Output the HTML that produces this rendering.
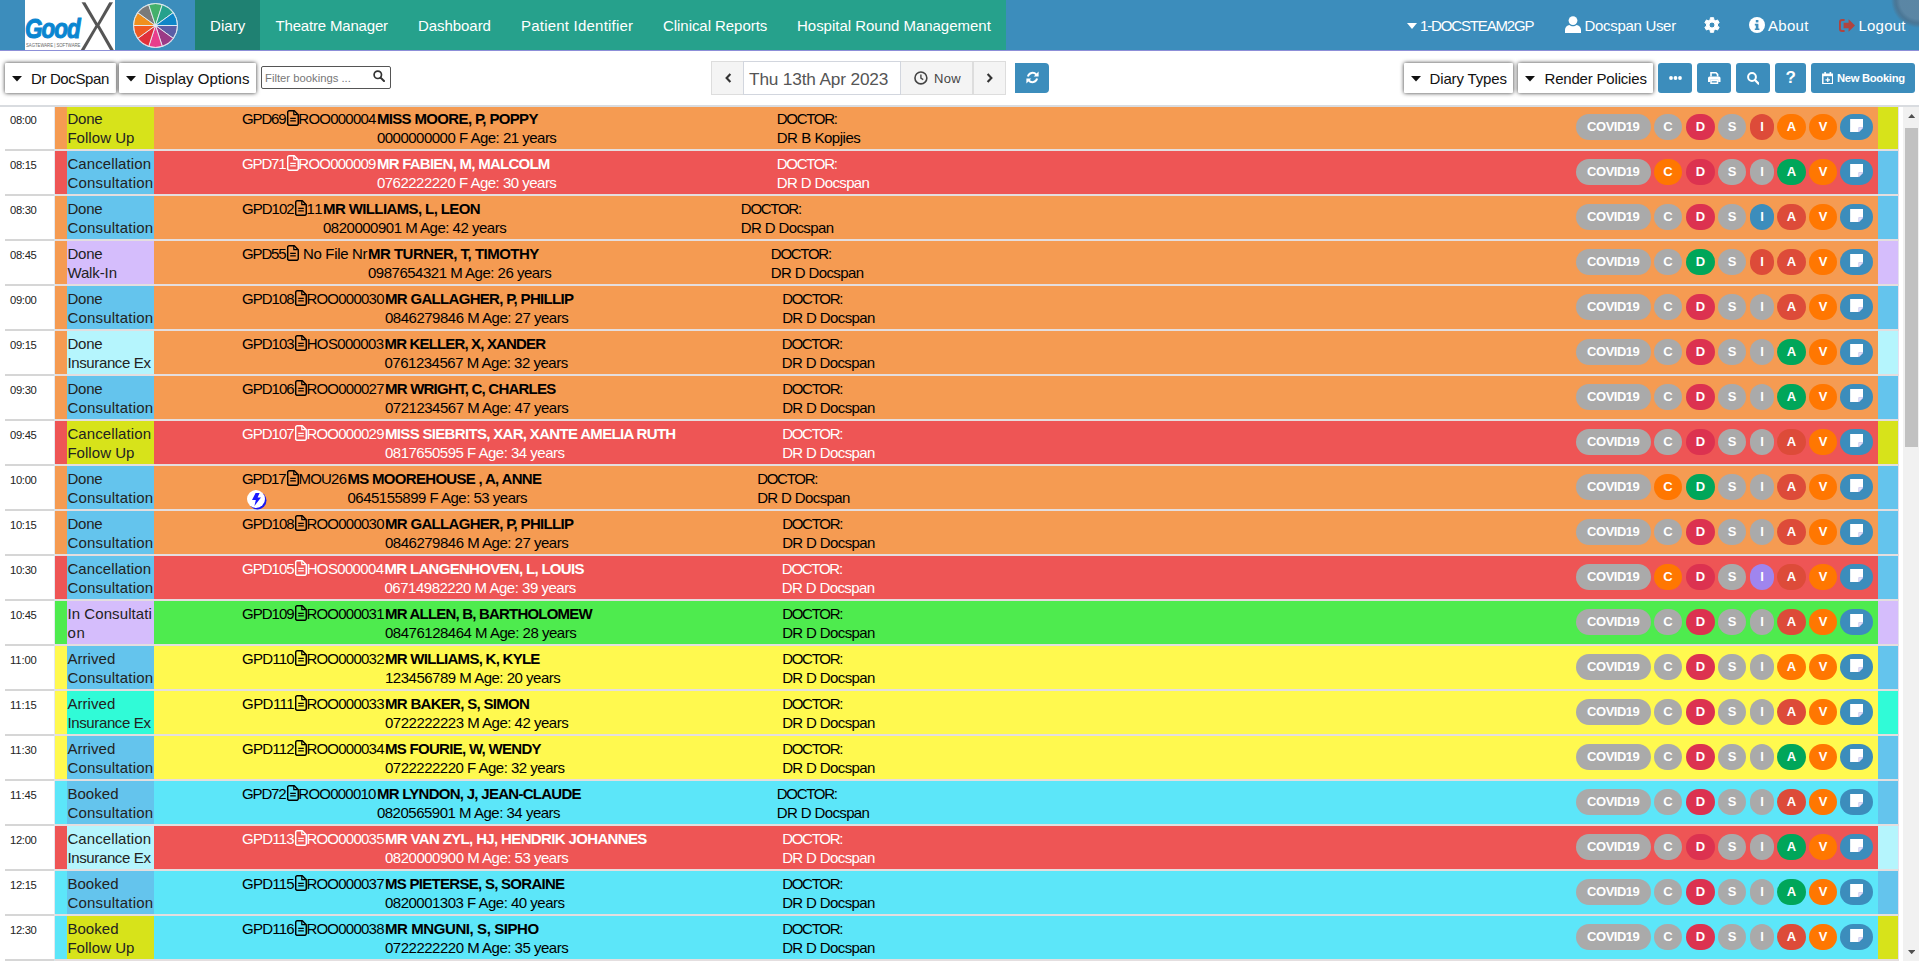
<!DOCTYPE html>
<html lang="en"><head><meta charset="utf-8"><title>Diary</title><style>
html,body{margin:0;padding:0;}
body{width:1919px;height:961px;overflow:hidden;position:relative;background:#fff;font-family:"Liberation Sans",sans-serif;}
#pg{position:absolute;left:0;top:0;width:1919px;height:961px;overflow:hidden;}
#pg>div,#pg>svg,#pg>span{position:absolute;display:block;}
.t{white-space:pre;line-height:20px;}
.lg1,.lg2,.lg3{position:absolute;white-space:pre;transform-origin:0 0;}
.lg1{left:0;top:12px;font:italic bold 28px/34px "Liberation Sans",sans-serif;color:#0a86d1;transform:scaleX(.80);letter-spacing:-1.2px;-webkit-text-stroke:1.1px #0a86d1;}
.lg2{left:52px;top:-10px;font:400 74px/74px "Liberation Sans",sans-serif;color:#555;transform:scaleX(.82);-webkit-text-stroke:2.3px #fff;}
.lg3{left:1px;top:41.5px;font:400 5px/6px "Liberation Sans",sans-serif;color:#666;transform:scaleX(.85);}
</style></head><body><div id="pg">
<div style="left:0px;top:0px;width:1919px;height:50px;background:#3c8dbc;"></div>
<div style="left:0px;top:50px;width:1919px;height:1px;background:#8d8fd8;"></div>
<div style="left:25px;top:0px;width:90px;height:50px;background:#fff;overflow:hidden;"><div class="lg2">X</div><div class="lg1">Good</div><div class="lg3">SAGTEWARE | SOFTWARE</div></div>
<svg style="left:132.5px;top:2.5px;" width="45" height="45" viewBox="0 0 45 45"><circle cx="22.5" cy="22.5" r="22.5" fill="#e8eef4"/><path d="M22.5 22.5L44.40 22.50A21.9 21.9 0 0 1 40.22 35.37Z" fill="#5b5ea6" stroke="#e8eef4" stroke-width="0.9"/><path d="M22.5 22.5L40.22 35.37A21.9 21.9 0 0 1 29.27 43.33Z" fill="#9b3a86" stroke="#e8eef4" stroke-width="0.9"/><path d="M22.5 22.5L29.27 43.33A21.9 21.9 0 0 1 15.73 43.33Z" fill="#e83e8c" stroke="#e8eef4" stroke-width="0.9"/><path d="M22.5 22.5L15.73 43.33A21.9 21.9 0 0 1 4.78 35.37Z" fill="#e0303a" stroke="#e8eef4" stroke-width="0.9"/><path d="M22.5 22.5L4.78 35.37A21.9 21.9 0 0 1 0.60 22.50Z" fill="#f05a22" stroke="#e8eef4" stroke-width="0.9"/><path d="M22.5 22.5L0.60 22.50A21.9 21.9 0 0 1 4.78 9.63Z" fill="#f0901e" stroke="#e8eef4" stroke-width="0.9"/><path d="M22.5 22.5L4.78 9.63A21.9 21.9 0 0 1 15.73 1.67Z" fill="#7a7a7a" stroke="#e8eef4" stroke-width="0.9"/><path d="M22.5 22.5L15.73 1.67A21.9 21.9 0 0 1 29.27 1.67Z" fill="#44b06a" stroke="#e8eef4" stroke-width="0.9"/><path d="M22.5 22.5L29.27 1.67A21.9 21.9 0 0 1 40.22 9.63Z" fill="#26a18c" stroke="#e8eef4" stroke-width="0.9"/><path d="M22.5 22.5L40.22 9.63A21.9 21.9 0 0 1 44.40 22.50Z" fill="#0e86c8" stroke="#e8eef4" stroke-width="0.9"/><circle cx="22.5" cy="22.5" r="1.6" fill="#dfe9f2"/></svg>
<div style="left:195px;top:0px;width:811px;height:50px;background:#26a18c;"></div>
<div style="left:195px;top:0px;width:65px;height:50px;background:#1f8172;"></div>
<svg style="left:1407px;top:22.5px;" width="10" height="6" viewBox="0 0 10 6"><path d="M0 0h10L5 6z" fill="#fff"/></svg>
<svg style="left:1565px;top:16px;" width="16" height="17" viewBox="0 0 16 17"><circle cx="8" cy="4.6" r="4.4" fill="#fff"/><path d="M0 17v-3.2c0-3 2.2-4.6 4.4-4.9 1 .9 2.2 1.4 3.6 1.4s2.6-.5 3.6-1.4c2.2.3 4.4 1.9 4.4 4.9V17z" fill="#fff"/></svg>
<svg style="left:1703.5px;top:17px;" width="16" height="16" viewBox="0 0 16 16"><path d="M6.27 2.67L6.36 0.68L9.64 0.68L9.73 2.67L11.75 3.84L13.52 2.92L15.16 5.76L13.48 6.84L13.48 9.16L15.16 10.24L13.52 13.08L11.75 12.16L9.73 13.33L9.64 15.32L6.36 15.32L6.27 13.33L4.25 12.16L2.48 13.08L0.84 10.24L2.52 9.16L2.52 6.84L0.84 5.76L2.48 2.92L4.25 3.84ZM11.0 8A3.0 3.0 0 1 0 5.0 8A3.0 3.0 0 1 0 11.0 8Z" fill="#fff" fill-rule="evenodd" stroke="#fff" stroke-width="1" stroke-linejoin="round"/></svg>
<svg style="left:1749px;top:17px;" width="16" height="16" viewBox="0 0 16 16"><circle cx="8" cy="8" r="8" fill="#fff"/><rect x="6.8" y="3" width="2.6" height="2.4" fill="#3c8dbc"/><path d="M5.8 6.8h3.6v4.6h1v1.6H5.8v-1.6h1V8.4h-1z" fill="#3c8dbc"/></svg>
<svg style="left:1839px;top:18.5px;" width="16" height="13" viewBox="0 0 16 13"><path d="M5.6 0H3A3 3 0 0 0 0 3v7a3 3 0 0 0 3 3h2.6v-1.9H3.2A1.3 1.3 0 0 1 1.9 9.8V3.2a1.3 1.3 0 0 1 1.3-1.3h2.4z" fill="#b0443f"/><path d="M9.6 0.3L16 6.5 9.6 12.7V9.2H4.6V3.8h5z" fill="#b0443f"/></svg>
<div style="left:1889px;top:-30px;width:60px;height:60px;border-radius:50%;background:radial-gradient(circle,rgba(110,130,150,.62) 0,rgba(110,130,150,.62) 19px,rgba(80,110,135,.72) 23px,rgba(80,110,135,.55) 25px,rgba(80,110,135,0) 28px);"></div>
<div style="left:5px;top:63px;width:111px;height:30px;background:#fff;box-shadow:0 0 4px rgba(0,0,0,.8);border-radius:1px;"></div>
<svg style="left:12px;top:76px;" width="10" height="5.5" viewBox="0 0 10 5.5"><path d="M0 0h10L5 5.5z" fill="#111"/></svg>
<div style="left:119px;top:63px;width:137px;height:30px;background:#fff;box-shadow:0 0 4px rgba(0,0,0,.8);border-radius:1px;"></div>
<svg style="left:126px;top:76px;" width="10" height="5.5" viewBox="0 0 10 5.5"><path d="M0 0h10L5 5.5z" fill="#111"/></svg>
<div style="left:1404px;top:63px;width:109px;height:30px;background:#fff;box-shadow:0 0 4px rgba(0,0,0,.8);border-radius:1px;"></div>
<svg style="left:1411px;top:76px;" width="10" height="5.5" viewBox="0 0 10 5.5"><path d="M0 0h10L5 5.5z" fill="#111"/></svg>
<div style="left:1518px;top:63px;width:135px;height:30px;background:#fff;box-shadow:0 0 4px rgba(0,0,0,.8);border-radius:1px;"></div>
<svg style="left:1525px;top:76px;" width="10" height="5.5" viewBox="0 0 10 5.5"><path d="M0 0h10L5 5.5z" fill="#111"/></svg>
<div style="left:261px;top:66px;width:130px;height:23px;background:#fff;border:1px solid #555;border-radius:2px;box-sizing:border-box;"></div>
<svg style="left:373.2px;top:70.3px;" width="12" height="12" viewBox="0 0 12 12"><circle cx="4.8" cy="4.8" r="3.7" fill="none" stroke="#333" stroke-width="1.7"/><path d="M7.6 7.6L11 11" stroke="#333" stroke-width="2" stroke-linecap="round"/></svg>
<div style="left:711px;top:61px;width:295px;height:34px;background:#f4f4f4;border:1px solid #ddd;box-sizing:border-box;"></div>
<div style="left:743px;top:61px;width:158px;height:34px;background:#fff;border:1px solid #d2d6de;box-sizing:border-box;"></div>
<div style="left:972px;top:61px;width:2px;height:34px;background:#ddd;"></div>
<svg style="left:725px;top:73px;" width="7" height="10" viewBox="0 0 7 10"><path d="M5.4 1L1.6 5l3.8 4" fill="none" stroke="#333" stroke-width="2.1"/></svg>
<svg style="left:986px;top:73px;" width="7" height="10" viewBox="0 0 7 10"><path d="M1.6 1l3.8 4-3.8 4" fill="none" stroke="#333" stroke-width="2.1"/></svg>
<svg style="left:914.3px;top:70.9px;" width="13.8" height="13.8" viewBox="0 0 13 13"><circle cx="6.5" cy="6.5" r="5.6" fill="none" stroke="#444" stroke-width="1.5"/><path d="M6.5 3.2v3.6l2.2 1.3" fill="none" stroke="#444" stroke-width="1.3"/></svg>
<div style="left:1015px;top:63px;width:34px;height:30px;background:#3c8dbc;border-radius:0 4px 4px 0;"></div>
<svg style="left:1025.5px;top:70.8px;" width="13" height="13" viewBox="0 0 13 13"><path d="M1.9 5.4A4.8 4.8 0 0 1 10.3 3.6" fill="none" stroke="#fff" stroke-width="2"/><path d="M12.6 0.6v4.9H7.7z" fill="#fff"/><path d="M11.1 7.6A4.8 4.8 0 0 1 2.7 9.4" fill="none" stroke="#fff" stroke-width="2"/><path d="M0.4 12.4V7.5h4.9z" fill="#fff"/></svg>
<div style="left:1658px;top:63px;width:34px;height:30px;background:#3c8dbc;border-radius:3px;"></div>
<div style="left:1697px;top:63px;width:34px;height:30px;background:#3c8dbc;border-radius:3px;"></div>
<div style="left:1736px;top:63px;width:34px;height:30px;background:#3c8dbc;border-radius:3px;"></div>
<div style="left:1775px;top:63px;width:31px;height:30px;background:#3c8dbc;border-radius:3px;"></div>
<div style="left:1811px;top:63px;width:104px;height:30px;background:#3c8dbc;border-radius:3px;"></div>
<svg style="left:1668.5px;top:75.5px;" width="13" height="4" viewBox="0 0 13 4"><circle cx="2" cy="2" r="1.9" fill="#fff"/><circle cx="6.5" cy="2" r="1.9" fill="#fff"/><circle cx="11" cy="2" r="1.9" fill="#fff"/></svg>
<svg style="left:1708px;top:72px;" width="12.5" height="12" viewBox="0 0 12.5 12"><path d="M3 4.6V0.8h5l1.6 1.6v2.2" fill="none" stroke="#fff" stroke-width="1.6"/><path d="M0 6a1.6 1.6 0 0 1 1.6-1.6h9.3A1.6 1.6 0 0 1 12.5 6v4h-2.3V7.8H2.3V10H0z" fill="#fff"/><path d="M3 8.6h6.5v2.6H3z" fill="none" stroke="#fff" stroke-width="1.5"/></svg>
<svg style="left:1746.5px;top:72px;" width="12.5" height="12.5" viewBox="0 0 12.5 12.5"><circle cx="5" cy="5" r="3.9" fill="none" stroke="#fff" stroke-width="2"/><path d="M8 8l3.6 3.6" stroke="#fff" stroke-width="2.2" stroke-linecap="round"/></svg>
<svg style="left:1821.5px;top:71.5px;" width="11.5" height="12.5" viewBox="0 0 11.5 12.5"><path d="M0.8 2.3h9.9v9.4H0.8z" fill="none" stroke="#fff" stroke-width="1.5"/><path d="M0.8 2h9.9v2.2H0.8z" fill="#fff"/><path d="M3.1 0v2.6M8.4 0v2.6" stroke="#fff" stroke-width="1.6"/><path d="M5.75 5.6v4.4M3.5 7.8H8" stroke="#fff" stroke-width="1.3"/></svg>
<div style="left:0px;top:105px;width:1919px;height:2px;background:#d9dce0;"></div>
<div style="left:55px;top:107px;width:1843px;height:42px;background:#f59b52;"></div>
<div style="left:54px;top:107px;width:1px;height:42px;background:#e4e8ee;"></div>
<div style="left:67px;top:107px;width:87px;height:42px;background:#d7e31a;"></div>
<div style="left:1878px;top:107px;width:20px;height:42px;background:#d7e31a;"></div>
<div style="left:1898px;top:107px;width:1px;height:42px;background:#e6e0f0;"></div>
<div style="left:5px;top:149px;width:50px;height:2px;background:#d6d6d6;"></div>
<div style="left:55px;top:149px;width:1844px;height:2px;background:#e4dedf;"></div>
<div style="left:54px;top:149px;width:1px;height:2px;background:#d8e6ea;"></div>
<svg style="left:287.0px;top:110px;" width="12" height="16" viewBox="0 0 12 16"><path d="M2.2 .75H7.3L11.25 4.7V13.8a1.5 1.5 0 0 1-1.5 1.5H2.2a1.5 1.5 0 0 1-1.5-1.5V2.25a1.5 1.5 0 0 1 1.5-1.5z" fill="none" stroke="#000" stroke-width="1.45" stroke-linejoin="round"/><path d="M6.8 1v3.6h3.9" fill="none" stroke="#000" stroke-width="1.2"/><path d="M3.2 8.4h5.6M3.2 10.9h5.6" stroke="#000" stroke-width="1.35"/></svg>
<div style="left:1576px;top:114px;width:75px;height:26px;background:#aaaaaa;border-radius:13px;"></div>
<div style="left:1654px;top:114px;width:28px;height:26px;background:#aaaaaa;border-radius:13px;"></div>
<div style="left:1686px;top:114px;width:29px;height:26px;background:#dc3250;border-radius:13px;"></div>
<div style="left:1718px;top:114px;width:28px;height:26px;background:#aaaaaa;border-radius:13px;"></div>
<div style="left:1750px;top:114px;width:24px;height:26px;background:#dd4b39;border-radius:13px;"></div>
<div style="left:1777px;top:114px;width:29px;height:26px;background:#ff7701;border-radius:13px;"></div>
<div style="left:1809px;top:114px;width:28px;height:26px;background:#ff7701;border-radius:13px;"></div>
<div style="left:1840px;top:114px;width:33px;height:26px;background:#3c8dbc;border-radius:13px;"></div>
<svg style="left:1850px;top:119px;" width="13.3" height="13" viewBox="0 0 13 13"><path d="M0 0h13v8.6L8.6 13H0z" fill="#fff"/><path d="M8.6 13V8.6H13z" fill="#e4e6fa" stroke="#b9b4e6" stroke-width=".6"/></svg>
<div style="left:55px;top:151px;width:1843px;height:43px;background:#ee5555;"></div>
<div style="left:54px;top:151px;width:1px;height:43px;background:#e4e8ee;"></div>
<div style="left:67px;top:151px;width:87px;height:43px;background:#64c4ed;"></div>
<div style="left:1878px;top:151px;width:20px;height:43px;background:#64c4ed;"></div>
<div style="left:1898px;top:151px;width:1px;height:43px;background:#e6e0f0;"></div>
<div style="left:5px;top:194px;width:50px;height:2px;background:#d6d6d6;"></div>
<div style="left:55px;top:194px;width:1844px;height:2px;background:#e4dedf;"></div>
<div style="left:54px;top:194px;width:1px;height:2px;background:#d8e6ea;"></div>
<svg style="left:287.0px;top:155px;" width="12" height="16" viewBox="0 0 12 16"><path d="M2.2 .75H7.3L11.25 4.7V13.8a1.5 1.5 0 0 1-1.5 1.5H2.2a1.5 1.5 0 0 1-1.5-1.5V2.25a1.5 1.5 0 0 1 1.5-1.5z" fill="none" stroke="#fff" stroke-width="1.45" stroke-linejoin="round"/><path d="M6.8 1v3.6h3.9" fill="none" stroke="#fff" stroke-width="1.2"/><path d="M3.2 8.4h5.6M3.2 10.9h5.6" stroke="#fff" stroke-width="1.35"/></svg>
<div style="left:1576px;top:159px;width:75px;height:26px;background:#aaaaaa;border-radius:13px;"></div>
<div style="left:1654px;top:159px;width:28px;height:26px;background:#ff7701;border-radius:13px;"></div>
<div style="left:1686px;top:159px;width:29px;height:26px;background:#dc3250;border-radius:13px;"></div>
<div style="left:1718px;top:159px;width:28px;height:26px;background:#aaaaaa;border-radius:13px;"></div>
<div style="left:1750px;top:159px;width:24px;height:26px;background:#aaaaaa;border-radius:13px;"></div>
<div style="left:1777px;top:159px;width:29px;height:26px;background:#00a65a;border-radius:13px;"></div>
<div style="left:1809px;top:159px;width:28px;height:26px;background:#ff7701;border-radius:13px;"></div>
<div style="left:1840px;top:159px;width:33px;height:26px;background:#3c8dbc;border-radius:13px;"></div>
<svg style="left:1850px;top:164px;" width="13.3" height="13" viewBox="0 0 13 13"><path d="M0 0h13v8.6L8.6 13H0z" fill="#fff"/><path d="M8.6 13V8.6H13z" fill="#e4e6fa" stroke="#b9b4e6" stroke-width=".6"/></svg>
<div style="left:55px;top:196px;width:1843px;height:43px;background:#f59b52;"></div>
<div style="left:54px;top:196px;width:1px;height:43px;background:#e4e8ee;"></div>
<div style="left:67px;top:196px;width:87px;height:43px;background:#64c4ed;"></div>
<div style="left:1878px;top:196px;width:20px;height:43px;background:#64c4ed;"></div>
<div style="left:1898px;top:196px;width:1px;height:43px;background:#e6e0f0;"></div>
<div style="left:5px;top:239px;width:50px;height:2px;background:#d6d6d6;"></div>
<div style="left:55px;top:239px;width:1844px;height:2px;background:#e4dedf;"></div>
<div style="left:54px;top:239px;width:1px;height:2px;background:#d8e6ea;"></div>
<svg style="left:295.0px;top:200px;" width="12" height="16" viewBox="0 0 12 16"><path d="M2.2 .75H7.3L11.25 4.7V13.8a1.5 1.5 0 0 1-1.5 1.5H2.2a1.5 1.5 0 0 1-1.5-1.5V2.25a1.5 1.5 0 0 1 1.5-1.5z" fill="none" stroke="#000" stroke-width="1.45" stroke-linejoin="round"/><path d="M6.8 1v3.6h3.9" fill="none" stroke="#000" stroke-width="1.2"/><path d="M3.2 8.4h5.6M3.2 10.9h5.6" stroke="#000" stroke-width="1.35"/></svg>
<div style="left:1576px;top:204px;width:75px;height:26px;background:#aaaaaa;border-radius:13px;"></div>
<div style="left:1654px;top:204px;width:28px;height:26px;background:#aaaaaa;border-radius:13px;"></div>
<div style="left:1686px;top:204px;width:29px;height:26px;background:#dc3250;border-radius:13px;"></div>
<div style="left:1718px;top:204px;width:28px;height:26px;background:#aaaaaa;border-radius:13px;"></div>
<div style="left:1750px;top:204px;width:24px;height:26px;background:#3c8dbc;border-radius:13px;"></div>
<div style="left:1777px;top:204px;width:29px;height:26px;background:#dd4b39;border-radius:13px;"></div>
<div style="left:1809px;top:204px;width:28px;height:26px;background:#ff7701;border-radius:13px;"></div>
<div style="left:1840px;top:204px;width:33px;height:26px;background:#3c8dbc;border-radius:13px;"></div>
<svg style="left:1850px;top:209px;" width="13.3" height="13" viewBox="0 0 13 13"><path d="M0 0h13v8.6L8.6 13H0z" fill="#fff"/><path d="M8.6 13V8.6H13z" fill="#e4e6fa" stroke="#b9b4e6" stroke-width=".6"/></svg>
<div style="left:55px;top:241px;width:1843px;height:43px;background:#f59b52;"></div>
<div style="left:54px;top:241px;width:1px;height:43px;background:#e4e8ee;"></div>
<div style="left:67px;top:241px;width:87px;height:43px;background:#d5bdfc;"></div>
<div style="left:1878px;top:241px;width:20px;height:43px;background:#d5bdfc;"></div>
<div style="left:1898px;top:241px;width:1px;height:43px;background:#e6e0f0;"></div>
<div style="left:5px;top:284px;width:50px;height:2px;background:#d6d6d6;"></div>
<div style="left:55px;top:284px;width:1844px;height:2px;background:#e4dedf;"></div>
<div style="left:54px;top:284px;width:1px;height:2px;background:#d8e6ea;"></div>
<svg style="left:287.0px;top:245px;" width="12" height="16" viewBox="0 0 12 16"><path d="M2.2 .75H7.3L11.25 4.7V13.8a1.5 1.5 0 0 1-1.5 1.5H2.2a1.5 1.5 0 0 1-1.5-1.5V2.25a1.5 1.5 0 0 1 1.5-1.5z" fill="none" stroke="#000" stroke-width="1.45" stroke-linejoin="round"/><path d="M6.8 1v3.6h3.9" fill="none" stroke="#000" stroke-width="1.2"/><path d="M3.2 8.4h5.6M3.2 10.9h5.6" stroke="#000" stroke-width="1.35"/></svg>
<div style="left:1576px;top:249px;width:75px;height:26px;background:#aaaaaa;border-radius:13px;"></div>
<div style="left:1654px;top:249px;width:28px;height:26px;background:#aaaaaa;border-radius:13px;"></div>
<div style="left:1686px;top:249px;width:29px;height:26px;background:#00a65a;border-radius:13px;"></div>
<div style="left:1718px;top:249px;width:28px;height:26px;background:#aaaaaa;border-radius:13px;"></div>
<div style="left:1750px;top:249px;width:24px;height:26px;background:#dd4b39;border-radius:13px;"></div>
<div style="left:1777px;top:249px;width:29px;height:26px;background:#dd4b39;border-radius:13px;"></div>
<div style="left:1809px;top:249px;width:28px;height:26px;background:#ff7701;border-radius:13px;"></div>
<div style="left:1840px;top:249px;width:33px;height:26px;background:#3c8dbc;border-radius:13px;"></div>
<svg style="left:1850px;top:254px;" width="13.3" height="13" viewBox="0 0 13 13"><path d="M0 0h13v8.6L8.6 13H0z" fill="#fff"/><path d="M8.6 13V8.6H13z" fill="#e4e6fa" stroke="#b9b4e6" stroke-width=".6"/></svg>
<div style="left:55px;top:286px;width:1843px;height:43px;background:#f59b52;"></div>
<div style="left:54px;top:286px;width:1px;height:43px;background:#e4e8ee;"></div>
<div style="left:67px;top:286px;width:87px;height:43px;background:#64c4ed;"></div>
<div style="left:1878px;top:286px;width:20px;height:43px;background:#64c4ed;"></div>
<div style="left:1898px;top:286px;width:1px;height:43px;background:#e6e0f0;"></div>
<div style="left:5px;top:329px;width:50px;height:2px;background:#d6d6d6;"></div>
<div style="left:55px;top:329px;width:1844px;height:2px;background:#e4dedf;"></div>
<div style="left:54px;top:329px;width:1px;height:2px;background:#d8e6ea;"></div>
<svg style="left:295.0px;top:290px;" width="12" height="16" viewBox="0 0 12 16"><path d="M2.2 .75H7.3L11.25 4.7V13.8a1.5 1.5 0 0 1-1.5 1.5H2.2a1.5 1.5 0 0 1-1.5-1.5V2.25a1.5 1.5 0 0 1 1.5-1.5z" fill="none" stroke="#000" stroke-width="1.45" stroke-linejoin="round"/><path d="M6.8 1v3.6h3.9" fill="none" stroke="#000" stroke-width="1.2"/><path d="M3.2 8.4h5.6M3.2 10.9h5.6" stroke="#000" stroke-width="1.35"/></svg>
<div style="left:1576px;top:294px;width:75px;height:26px;background:#aaaaaa;border-radius:13px;"></div>
<div style="left:1654px;top:294px;width:28px;height:26px;background:#aaaaaa;border-radius:13px;"></div>
<div style="left:1686px;top:294px;width:29px;height:26px;background:#dc3250;border-radius:13px;"></div>
<div style="left:1718px;top:294px;width:28px;height:26px;background:#aaaaaa;border-radius:13px;"></div>
<div style="left:1750px;top:294px;width:24px;height:26px;background:#aaaaaa;border-radius:13px;"></div>
<div style="left:1777px;top:294px;width:29px;height:26px;background:#dd4b39;border-radius:13px;"></div>
<div style="left:1809px;top:294px;width:28px;height:26px;background:#ff7701;border-radius:13px;"></div>
<div style="left:1840px;top:294px;width:33px;height:26px;background:#3c8dbc;border-radius:13px;"></div>
<svg style="left:1850px;top:299px;" width="13.3" height="13" viewBox="0 0 13 13"><path d="M0 0h13v8.6L8.6 13H0z" fill="#fff"/><path d="M8.6 13V8.6H13z" fill="#e4e6fa" stroke="#b9b4e6" stroke-width=".6"/></svg>
<div style="left:55px;top:331px;width:1843px;height:43px;background:#f59b52;"></div>
<div style="left:54px;top:331px;width:1px;height:43px;background:#e4e8ee;"></div>
<div style="left:67px;top:331px;width:87px;height:43px;background:#b5f5fd;"></div>
<div style="left:1878px;top:331px;width:20px;height:43px;background:#b5f5fd;"></div>
<div style="left:1898px;top:331px;width:1px;height:43px;background:#e6e0f0;"></div>
<div style="left:5px;top:374px;width:50px;height:2px;background:#d6d6d6;"></div>
<div style="left:55px;top:374px;width:1844px;height:2px;background:#e4dedf;"></div>
<div style="left:54px;top:374px;width:1px;height:2px;background:#d8e6ea;"></div>
<svg style="left:295.0px;top:335px;" width="12" height="16" viewBox="0 0 12 16"><path d="M2.2 .75H7.3L11.25 4.7V13.8a1.5 1.5 0 0 1-1.5 1.5H2.2a1.5 1.5 0 0 1-1.5-1.5V2.25a1.5 1.5 0 0 1 1.5-1.5z" fill="none" stroke="#000" stroke-width="1.45" stroke-linejoin="round"/><path d="M6.8 1v3.6h3.9" fill="none" stroke="#000" stroke-width="1.2"/><path d="M3.2 8.4h5.6M3.2 10.9h5.6" stroke="#000" stroke-width="1.35"/></svg>
<div style="left:1576px;top:339px;width:75px;height:26px;background:#aaaaaa;border-radius:13px;"></div>
<div style="left:1654px;top:339px;width:28px;height:26px;background:#aaaaaa;border-radius:13px;"></div>
<div style="left:1686px;top:339px;width:29px;height:26px;background:#dc3250;border-radius:13px;"></div>
<div style="left:1718px;top:339px;width:28px;height:26px;background:#aaaaaa;border-radius:13px;"></div>
<div style="left:1750px;top:339px;width:24px;height:26px;background:#aaaaaa;border-radius:13px;"></div>
<div style="left:1777px;top:339px;width:29px;height:26px;background:#00a65a;border-radius:13px;"></div>
<div style="left:1809px;top:339px;width:28px;height:26px;background:#ff7701;border-radius:13px;"></div>
<div style="left:1840px;top:339px;width:33px;height:26px;background:#3c8dbc;border-radius:13px;"></div>
<svg style="left:1850px;top:344px;" width="13.3" height="13" viewBox="0 0 13 13"><path d="M0 0h13v8.6L8.6 13H0z" fill="#fff"/><path d="M8.6 13V8.6H13z" fill="#e4e6fa" stroke="#b9b4e6" stroke-width=".6"/></svg>
<div style="left:55px;top:376px;width:1843px;height:43px;background:#f59b52;"></div>
<div style="left:54px;top:376px;width:1px;height:43px;background:#e4e8ee;"></div>
<div style="left:67px;top:376px;width:87px;height:43px;background:#64c4ed;"></div>
<div style="left:1878px;top:376px;width:20px;height:43px;background:#64c4ed;"></div>
<div style="left:1898px;top:376px;width:1px;height:43px;background:#e6e0f0;"></div>
<div style="left:5px;top:419px;width:50px;height:2px;background:#d6d6d6;"></div>
<div style="left:55px;top:419px;width:1844px;height:2px;background:#e4dedf;"></div>
<div style="left:54px;top:419px;width:1px;height:2px;background:#d8e6ea;"></div>
<svg style="left:295.0px;top:380px;" width="12" height="16" viewBox="0 0 12 16"><path d="M2.2 .75H7.3L11.25 4.7V13.8a1.5 1.5 0 0 1-1.5 1.5H2.2a1.5 1.5 0 0 1-1.5-1.5V2.25a1.5 1.5 0 0 1 1.5-1.5z" fill="none" stroke="#000" stroke-width="1.45" stroke-linejoin="round"/><path d="M6.8 1v3.6h3.9" fill="none" stroke="#000" stroke-width="1.2"/><path d="M3.2 8.4h5.6M3.2 10.9h5.6" stroke="#000" stroke-width="1.35"/></svg>
<div style="left:1576px;top:384px;width:75px;height:26px;background:#aaaaaa;border-radius:13px;"></div>
<div style="left:1654px;top:384px;width:28px;height:26px;background:#aaaaaa;border-radius:13px;"></div>
<div style="left:1686px;top:384px;width:29px;height:26px;background:#dc3250;border-radius:13px;"></div>
<div style="left:1718px;top:384px;width:28px;height:26px;background:#aaaaaa;border-radius:13px;"></div>
<div style="left:1750px;top:384px;width:24px;height:26px;background:#aaaaaa;border-radius:13px;"></div>
<div style="left:1777px;top:384px;width:29px;height:26px;background:#00a65a;border-radius:13px;"></div>
<div style="left:1809px;top:384px;width:28px;height:26px;background:#ff7701;border-radius:13px;"></div>
<div style="left:1840px;top:384px;width:33px;height:26px;background:#3c8dbc;border-radius:13px;"></div>
<svg style="left:1850px;top:389px;" width="13.3" height="13" viewBox="0 0 13 13"><path d="M0 0h13v8.6L8.6 13H0z" fill="#fff"/><path d="M8.6 13V8.6H13z" fill="#e4e6fa" stroke="#b9b4e6" stroke-width=".6"/></svg>
<div style="left:55px;top:421px;width:1843px;height:43px;background:#ee5555;"></div>
<div style="left:54px;top:421px;width:1px;height:43px;background:#e4e8ee;"></div>
<div style="left:67px;top:421px;width:87px;height:43px;background:#d7e31a;"></div>
<div style="left:1878px;top:421px;width:20px;height:43px;background:#d7e31a;"></div>
<div style="left:1898px;top:421px;width:1px;height:43px;background:#e6e0f0;"></div>
<div style="left:5px;top:464px;width:50px;height:2px;background:#d6d6d6;"></div>
<div style="left:55px;top:464px;width:1844px;height:2px;background:#e4dedf;"></div>
<div style="left:54px;top:464px;width:1px;height:2px;background:#d8e6ea;"></div>
<svg style="left:295.0px;top:425px;" width="12" height="16" viewBox="0 0 12 16"><path d="M2.2 .75H7.3L11.25 4.7V13.8a1.5 1.5 0 0 1-1.5 1.5H2.2a1.5 1.5 0 0 1-1.5-1.5V2.25a1.5 1.5 0 0 1 1.5-1.5z" fill="none" stroke="#fff" stroke-width="1.45" stroke-linejoin="round"/><path d="M6.8 1v3.6h3.9" fill="none" stroke="#fff" stroke-width="1.2"/><path d="M3.2 8.4h5.6M3.2 10.9h5.6" stroke="#fff" stroke-width="1.35"/></svg>
<div style="left:1576px;top:429px;width:75px;height:26px;background:#aaaaaa;border-radius:13px;"></div>
<div style="left:1654px;top:429px;width:28px;height:26px;background:#aaaaaa;border-radius:13px;"></div>
<div style="left:1686px;top:429px;width:29px;height:26px;background:#dc3250;border-radius:13px;"></div>
<div style="left:1718px;top:429px;width:28px;height:26px;background:#aaaaaa;border-radius:13px;"></div>
<div style="left:1750px;top:429px;width:24px;height:26px;background:#aaaaaa;border-radius:13px;"></div>
<div style="left:1777px;top:429px;width:29px;height:26px;background:#dd4b39;border-radius:13px;"></div>
<div style="left:1809px;top:429px;width:28px;height:26px;background:#ff7701;border-radius:13px;"></div>
<div style="left:1840px;top:429px;width:33px;height:26px;background:#3c8dbc;border-radius:13px;"></div>
<svg style="left:1850px;top:434px;" width="13.3" height="13" viewBox="0 0 13 13"><path d="M0 0h13v8.6L8.6 13H0z" fill="#fff"/><path d="M8.6 13V8.6H13z" fill="#e4e6fa" stroke="#b9b4e6" stroke-width=".6"/></svg>
<div style="left:55px;top:466px;width:1843px;height:43px;background:#f59b52;"></div>
<div style="left:54px;top:466px;width:1px;height:43px;background:#e4e8ee;"></div>
<div style="left:67px;top:466px;width:87px;height:43px;background:#64c4ed;"></div>
<div style="left:1878px;top:466px;width:20px;height:43px;background:#64c4ed;"></div>
<div style="left:1898px;top:466px;width:1px;height:43px;background:#e6e0f0;"></div>
<div style="left:5px;top:509px;width:50px;height:2px;background:#d6d6d6;"></div>
<div style="left:55px;top:509px;width:1844px;height:2px;background:#e4dedf;"></div>
<div style="left:54px;top:509px;width:1px;height:2px;background:#d8e6ea;"></div>
<svg style="left:287.0px;top:470px;" width="12" height="16" viewBox="0 0 12 16"><path d="M2.2 .75H7.3L11.25 4.7V13.8a1.5 1.5 0 0 1-1.5 1.5H2.2a1.5 1.5 0 0 1-1.5-1.5V2.25a1.5 1.5 0 0 1 1.5-1.5z" fill="none" stroke="#000" stroke-width="1.45" stroke-linejoin="round"/><path d="M6.8 1v3.6h3.9" fill="none" stroke="#000" stroke-width="1.2"/><path d="M3.2 8.4h5.6M3.2 10.9h5.6" stroke="#000" stroke-width="1.35"/></svg>
<div style="left:1576px;top:474px;width:75px;height:26px;background:#aaaaaa;border-radius:13px;"></div>
<div style="left:1654px;top:474px;width:28px;height:26px;background:#ff7701;border-radius:13px;"></div>
<div style="left:1686px;top:474px;width:29px;height:26px;background:#00a65a;border-radius:13px;"></div>
<div style="left:1718px;top:474px;width:28px;height:26px;background:#aaaaaa;border-radius:13px;"></div>
<div style="left:1750px;top:474px;width:24px;height:26px;background:#aaaaaa;border-radius:13px;"></div>
<div style="left:1777px;top:474px;width:29px;height:26px;background:#dd4b39;border-radius:13px;"></div>
<div style="left:1809px;top:474px;width:28px;height:26px;background:#ff7701;border-radius:13px;"></div>
<div style="left:1840px;top:474px;width:33px;height:26px;background:#3c8dbc;border-radius:13px;"></div>
<svg style="left:1850px;top:479px;" width="13.3" height="13" viewBox="0 0 13 13"><path d="M0 0h13v8.6L8.6 13H0z" fill="#fff"/><path d="M8.6 13V8.6H13z" fill="#e4e6fa" stroke="#b9b4e6" stroke-width=".6"/></svg>
<div style="left:247px;top:490px;width:18px;height:18px;background:#fff;border-radius:50%;box-shadow:1.5px 1.5px 0 #1a1af0;"></div>
<svg style="left:252px;top:492.5px;" width="9" height="13" viewBox="0 0 9 13"><path d="M3.6 0h4L5.6 4.4H9L2.4 13l1.4-6H0z" fill="#1a1aff"/></svg>
<div style="left:55px;top:511px;width:1843px;height:43px;background:#f59b52;"></div>
<div style="left:54px;top:511px;width:1px;height:43px;background:#e4e8ee;"></div>
<div style="left:67px;top:511px;width:87px;height:43px;background:#64c4ed;"></div>
<div style="left:1878px;top:511px;width:20px;height:43px;background:#64c4ed;"></div>
<div style="left:1898px;top:511px;width:1px;height:43px;background:#e6e0f0;"></div>
<div style="left:5px;top:554px;width:50px;height:2px;background:#d6d6d6;"></div>
<div style="left:55px;top:554px;width:1844px;height:2px;background:#e4dedf;"></div>
<div style="left:54px;top:554px;width:1px;height:2px;background:#d8e6ea;"></div>
<svg style="left:295.0px;top:515px;" width="12" height="16" viewBox="0 0 12 16"><path d="M2.2 .75H7.3L11.25 4.7V13.8a1.5 1.5 0 0 1-1.5 1.5H2.2a1.5 1.5 0 0 1-1.5-1.5V2.25a1.5 1.5 0 0 1 1.5-1.5z" fill="none" stroke="#000" stroke-width="1.45" stroke-linejoin="round"/><path d="M6.8 1v3.6h3.9" fill="none" stroke="#000" stroke-width="1.2"/><path d="M3.2 8.4h5.6M3.2 10.9h5.6" stroke="#000" stroke-width="1.35"/></svg>
<div style="left:1576px;top:519px;width:75px;height:26px;background:#aaaaaa;border-radius:13px;"></div>
<div style="left:1654px;top:519px;width:28px;height:26px;background:#aaaaaa;border-radius:13px;"></div>
<div style="left:1686px;top:519px;width:29px;height:26px;background:#dc3250;border-radius:13px;"></div>
<div style="left:1718px;top:519px;width:28px;height:26px;background:#aaaaaa;border-radius:13px;"></div>
<div style="left:1750px;top:519px;width:24px;height:26px;background:#aaaaaa;border-radius:13px;"></div>
<div style="left:1777px;top:519px;width:29px;height:26px;background:#dd4b39;border-radius:13px;"></div>
<div style="left:1809px;top:519px;width:28px;height:26px;background:#ff7701;border-radius:13px;"></div>
<div style="left:1840px;top:519px;width:33px;height:26px;background:#3c8dbc;border-radius:13px;"></div>
<svg style="left:1850px;top:524px;" width="13.3" height="13" viewBox="0 0 13 13"><path d="M0 0h13v8.6L8.6 13H0z" fill="#fff"/><path d="M8.6 13V8.6H13z" fill="#e4e6fa" stroke="#b9b4e6" stroke-width=".6"/></svg>
<div style="left:55px;top:556px;width:1843px;height:43px;background:#ee5555;"></div>
<div style="left:54px;top:556px;width:1px;height:43px;background:#e4e8ee;"></div>
<div style="left:67px;top:556px;width:87px;height:43px;background:#64c4ed;"></div>
<div style="left:1878px;top:556px;width:20px;height:43px;background:#64c4ed;"></div>
<div style="left:1898px;top:556px;width:1px;height:43px;background:#e6e0f0;"></div>
<div style="left:5px;top:599px;width:50px;height:2px;background:#d6d6d6;"></div>
<div style="left:55px;top:599px;width:1844px;height:2px;background:#e4dedf;"></div>
<div style="left:54px;top:599px;width:1px;height:2px;background:#d8e6ea;"></div>
<svg style="left:295.0px;top:560px;" width="12" height="16" viewBox="0 0 12 16"><path d="M2.2 .75H7.3L11.25 4.7V13.8a1.5 1.5 0 0 1-1.5 1.5H2.2a1.5 1.5 0 0 1-1.5-1.5V2.25a1.5 1.5 0 0 1 1.5-1.5z" fill="none" stroke="#fff" stroke-width="1.45" stroke-linejoin="round"/><path d="M6.8 1v3.6h3.9" fill="none" stroke="#fff" stroke-width="1.2"/><path d="M3.2 8.4h5.6M3.2 10.9h5.6" stroke="#fff" stroke-width="1.35"/></svg>
<div style="left:1576px;top:564px;width:75px;height:26px;background:#aaaaaa;border-radius:13px;"></div>
<div style="left:1654px;top:564px;width:28px;height:26px;background:#ff7701;border-radius:13px;"></div>
<div style="left:1686px;top:564px;width:29px;height:26px;background:#dc3250;border-radius:13px;"></div>
<div style="left:1718px;top:564px;width:28px;height:26px;background:#aaaaaa;border-radius:13px;"></div>
<div style="left:1750px;top:564px;width:24px;height:26px;background:#9f85ee;border-radius:13px;"></div>
<div style="left:1777px;top:564px;width:29px;height:26px;background:#dd4b39;border-radius:13px;"></div>
<div style="left:1809px;top:564px;width:28px;height:26px;background:#ff7701;border-radius:13px;"></div>
<div style="left:1840px;top:564px;width:33px;height:26px;background:#3c8dbc;border-radius:13px;"></div>
<svg style="left:1850px;top:569px;" width="13.3" height="13" viewBox="0 0 13 13"><path d="M0 0h13v8.6L8.6 13H0z" fill="#fff"/><path d="M8.6 13V8.6H13z" fill="#e4e6fa" stroke="#b9b4e6" stroke-width=".6"/></svg>
<div style="left:55px;top:601px;width:1843px;height:43px;background:#4eeb4e;"></div>
<div style="left:54px;top:601px;width:1px;height:43px;background:#e4e8ee;"></div>
<div style="left:67px;top:601px;width:87px;height:43px;background:#d5bdfc;"></div>
<div style="left:1878px;top:601px;width:20px;height:43px;background:#d5bdfc;"></div>
<div style="left:1898px;top:601px;width:1px;height:43px;background:#e6e0f0;"></div>
<div style="left:5px;top:644px;width:50px;height:2px;background:#d6d6d6;"></div>
<div style="left:55px;top:644px;width:1844px;height:2px;background:#e4dedf;"></div>
<div style="left:54px;top:644px;width:1px;height:2px;background:#d8e6ea;"></div>
<svg style="left:295.0px;top:605px;" width="12" height="16" viewBox="0 0 12 16"><path d="M2.2 .75H7.3L11.25 4.7V13.8a1.5 1.5 0 0 1-1.5 1.5H2.2a1.5 1.5 0 0 1-1.5-1.5V2.25a1.5 1.5 0 0 1 1.5-1.5z" fill="none" stroke="#000" stroke-width="1.45" stroke-linejoin="round"/><path d="M6.8 1v3.6h3.9" fill="none" stroke="#000" stroke-width="1.2"/><path d="M3.2 8.4h5.6M3.2 10.9h5.6" stroke="#000" stroke-width="1.35"/></svg>
<div style="left:1576px;top:609px;width:75px;height:26px;background:#aaaaaa;border-radius:13px;"></div>
<div style="left:1654px;top:609px;width:28px;height:26px;background:#aaaaaa;border-radius:13px;"></div>
<div style="left:1686px;top:609px;width:29px;height:26px;background:#dc3250;border-radius:13px;"></div>
<div style="left:1718px;top:609px;width:28px;height:26px;background:#aaaaaa;border-radius:13px;"></div>
<div style="left:1750px;top:609px;width:24px;height:26px;background:#aaaaaa;border-radius:13px;"></div>
<div style="left:1777px;top:609px;width:29px;height:26px;background:#dd4b39;border-radius:13px;"></div>
<div style="left:1809px;top:609px;width:28px;height:26px;background:#ff7701;border-radius:13px;"></div>
<div style="left:1840px;top:609px;width:33px;height:26px;background:#3c8dbc;border-radius:13px;"></div>
<svg style="left:1850px;top:614px;" width="13.3" height="13" viewBox="0 0 13 13"><path d="M0 0h13v8.6L8.6 13H0z" fill="#fff"/><path d="M8.6 13V8.6H13z" fill="#e4e6fa" stroke="#b9b4e6" stroke-width=".6"/></svg>
<div style="left:55px;top:646px;width:1843px;height:43px;background:#fff94f;"></div>
<div style="left:54px;top:646px;width:1px;height:43px;background:#e4e8ee;"></div>
<div style="left:67px;top:646px;width:87px;height:43px;background:#64c4ed;"></div>
<div style="left:1878px;top:646px;width:20px;height:43px;background:#64c4ed;"></div>
<div style="left:1898px;top:646px;width:1px;height:43px;background:#e6e0f0;"></div>
<div style="left:5px;top:689px;width:50px;height:2px;background:#d6d6d6;"></div>
<div style="left:55px;top:689px;width:1844px;height:2px;background:#e4dedf;"></div>
<div style="left:54px;top:689px;width:1px;height:2px;background:#d8e6ea;"></div>
<svg style="left:295.0px;top:650px;" width="12" height="16" viewBox="0 0 12 16"><path d="M2.2 .75H7.3L11.25 4.7V13.8a1.5 1.5 0 0 1-1.5 1.5H2.2a1.5 1.5 0 0 1-1.5-1.5V2.25a1.5 1.5 0 0 1 1.5-1.5z" fill="none" stroke="#000" stroke-width="1.45" stroke-linejoin="round"/><path d="M6.8 1v3.6h3.9" fill="none" stroke="#000" stroke-width="1.2"/><path d="M3.2 8.4h5.6M3.2 10.9h5.6" stroke="#000" stroke-width="1.35"/></svg>
<div style="left:1576px;top:654px;width:75px;height:26px;background:#aaaaaa;border-radius:13px;"></div>
<div style="left:1654px;top:654px;width:28px;height:26px;background:#aaaaaa;border-radius:13px;"></div>
<div style="left:1686px;top:654px;width:29px;height:26px;background:#dc3250;border-radius:13px;"></div>
<div style="left:1718px;top:654px;width:28px;height:26px;background:#aaaaaa;border-radius:13px;"></div>
<div style="left:1750px;top:654px;width:24px;height:26px;background:#aaaaaa;border-radius:13px;"></div>
<div style="left:1777px;top:654px;width:29px;height:26px;background:#ff7701;border-radius:13px;"></div>
<div style="left:1809px;top:654px;width:28px;height:26px;background:#ff7701;border-radius:13px;"></div>
<div style="left:1840px;top:654px;width:33px;height:26px;background:#3c8dbc;border-radius:13px;"></div>
<svg style="left:1850px;top:659px;" width="13.3" height="13" viewBox="0 0 13 13"><path d="M0 0h13v8.6L8.6 13H0z" fill="#fff"/><path d="M8.6 13V8.6H13z" fill="#e4e6fa" stroke="#b9b4e6" stroke-width=".6"/></svg>
<div style="left:55px;top:691px;width:1843px;height:43px;background:#fff94f;"></div>
<div style="left:54px;top:691px;width:1px;height:43px;background:#e4e8ee;"></div>
<div style="left:67px;top:691px;width:87px;height:43px;background:#30fbd7;"></div>
<div style="left:1878px;top:691px;width:20px;height:43px;background:#30fbd7;"></div>
<div style="left:1898px;top:691px;width:1px;height:43px;background:#e6e0f0;"></div>
<div style="left:5px;top:734px;width:50px;height:2px;background:#d6d6d6;"></div>
<div style="left:55px;top:734px;width:1844px;height:2px;background:#e4dedf;"></div>
<div style="left:54px;top:734px;width:1px;height:2px;background:#d8e6ea;"></div>
<svg style="left:295.0px;top:695px;" width="12" height="16" viewBox="0 0 12 16"><path d="M2.2 .75H7.3L11.25 4.7V13.8a1.5 1.5 0 0 1-1.5 1.5H2.2a1.5 1.5 0 0 1-1.5-1.5V2.25a1.5 1.5 0 0 1 1.5-1.5z" fill="none" stroke="#000" stroke-width="1.45" stroke-linejoin="round"/><path d="M6.8 1v3.6h3.9" fill="none" stroke="#000" stroke-width="1.2"/><path d="M3.2 8.4h5.6M3.2 10.9h5.6" stroke="#000" stroke-width="1.35"/></svg>
<div style="left:1576px;top:699px;width:75px;height:26px;background:#aaaaaa;border-radius:13px;"></div>
<div style="left:1654px;top:699px;width:28px;height:26px;background:#aaaaaa;border-radius:13px;"></div>
<div style="left:1686px;top:699px;width:29px;height:26px;background:#dc3250;border-radius:13px;"></div>
<div style="left:1718px;top:699px;width:28px;height:26px;background:#aaaaaa;border-radius:13px;"></div>
<div style="left:1750px;top:699px;width:24px;height:26px;background:#aaaaaa;border-radius:13px;"></div>
<div style="left:1777px;top:699px;width:29px;height:26px;background:#dd4b39;border-radius:13px;"></div>
<div style="left:1809px;top:699px;width:28px;height:26px;background:#ff7701;border-radius:13px;"></div>
<div style="left:1840px;top:699px;width:33px;height:26px;background:#3c8dbc;border-radius:13px;"></div>
<svg style="left:1850px;top:704px;" width="13.3" height="13" viewBox="0 0 13 13"><path d="M0 0h13v8.6L8.6 13H0z" fill="#fff"/><path d="M8.6 13V8.6H13z" fill="#e4e6fa" stroke="#b9b4e6" stroke-width=".6"/></svg>
<div style="left:55px;top:736px;width:1843px;height:43px;background:#fff94f;"></div>
<div style="left:54px;top:736px;width:1px;height:43px;background:#e4e8ee;"></div>
<div style="left:67px;top:736px;width:87px;height:43px;background:#64c4ed;"></div>
<div style="left:1878px;top:736px;width:20px;height:43px;background:#64c4ed;"></div>
<div style="left:1898px;top:736px;width:1px;height:43px;background:#e6e0f0;"></div>
<div style="left:5px;top:779px;width:50px;height:2px;background:#d6d6d6;"></div>
<div style="left:55px;top:779px;width:1844px;height:2px;background:#e4dedf;"></div>
<div style="left:54px;top:779px;width:1px;height:2px;background:#d8e6ea;"></div>
<svg style="left:295.0px;top:740px;" width="12" height="16" viewBox="0 0 12 16"><path d="M2.2 .75H7.3L11.25 4.7V13.8a1.5 1.5 0 0 1-1.5 1.5H2.2a1.5 1.5 0 0 1-1.5-1.5V2.25a1.5 1.5 0 0 1 1.5-1.5z" fill="none" stroke="#000" stroke-width="1.45" stroke-linejoin="round"/><path d="M6.8 1v3.6h3.9" fill="none" stroke="#000" stroke-width="1.2"/><path d="M3.2 8.4h5.6M3.2 10.9h5.6" stroke="#000" stroke-width="1.35"/></svg>
<div style="left:1576px;top:744px;width:75px;height:26px;background:#aaaaaa;border-radius:13px;"></div>
<div style="left:1654px;top:744px;width:28px;height:26px;background:#aaaaaa;border-radius:13px;"></div>
<div style="left:1686px;top:744px;width:29px;height:26px;background:#dc3250;border-radius:13px;"></div>
<div style="left:1718px;top:744px;width:28px;height:26px;background:#aaaaaa;border-radius:13px;"></div>
<div style="left:1750px;top:744px;width:24px;height:26px;background:#aaaaaa;border-radius:13px;"></div>
<div style="left:1777px;top:744px;width:29px;height:26px;background:#00a65a;border-radius:13px;"></div>
<div style="left:1809px;top:744px;width:28px;height:26px;background:#ff7701;border-radius:13px;"></div>
<div style="left:1840px;top:744px;width:33px;height:26px;background:#3c8dbc;border-radius:13px;"></div>
<svg style="left:1850px;top:749px;" width="13.3" height="13" viewBox="0 0 13 13"><path d="M0 0h13v8.6L8.6 13H0z" fill="#fff"/><path d="M8.6 13V8.6H13z" fill="#e4e6fa" stroke="#b9b4e6" stroke-width=".6"/></svg>
<div style="left:55px;top:781px;width:1843px;height:43px;background:#5ce6f9;"></div>
<div style="left:54px;top:781px;width:1px;height:43px;background:#e4e8ee;"></div>
<div style="left:67px;top:781px;width:87px;height:43px;background:#64c4ed;"></div>
<div style="left:1878px;top:781px;width:20px;height:43px;background:#64c4ed;"></div>
<div style="left:1898px;top:781px;width:1px;height:43px;background:#e6e0f0;"></div>
<div style="left:5px;top:824px;width:50px;height:2px;background:#d6d6d6;"></div>
<div style="left:55px;top:824px;width:1844px;height:2px;background:#e4dedf;"></div>
<div style="left:54px;top:824px;width:1px;height:2px;background:#d8e6ea;"></div>
<svg style="left:287.0px;top:785px;" width="12" height="16" viewBox="0 0 12 16"><path d="M2.2 .75H7.3L11.25 4.7V13.8a1.5 1.5 0 0 1-1.5 1.5H2.2a1.5 1.5 0 0 1-1.5-1.5V2.25a1.5 1.5 0 0 1 1.5-1.5z" fill="none" stroke="#000" stroke-width="1.45" stroke-linejoin="round"/><path d="M6.8 1v3.6h3.9" fill="none" stroke="#000" stroke-width="1.2"/><path d="M3.2 8.4h5.6M3.2 10.9h5.6" stroke="#000" stroke-width="1.35"/></svg>
<div style="left:1576px;top:789px;width:75px;height:26px;background:#aaaaaa;border-radius:13px;"></div>
<div style="left:1654px;top:789px;width:28px;height:26px;background:#aaaaaa;border-radius:13px;"></div>
<div style="left:1686px;top:789px;width:29px;height:26px;background:#dc3250;border-radius:13px;"></div>
<div style="left:1718px;top:789px;width:28px;height:26px;background:#aaaaaa;border-radius:13px;"></div>
<div style="left:1750px;top:789px;width:24px;height:26px;background:#aaaaaa;border-radius:13px;"></div>
<div style="left:1777px;top:789px;width:29px;height:26px;background:#dd4b39;border-radius:13px;"></div>
<div style="left:1809px;top:789px;width:28px;height:26px;background:#ff7701;border-radius:13px;"></div>
<div style="left:1840px;top:789px;width:33px;height:26px;background:#3c8dbc;border-radius:13px;"></div>
<svg style="left:1850px;top:794px;" width="13.3" height="13" viewBox="0 0 13 13"><path d="M0 0h13v8.6L8.6 13H0z" fill="#fff"/><path d="M8.6 13V8.6H13z" fill="#e4e6fa" stroke="#b9b4e6" stroke-width=".6"/></svg>
<div style="left:55px;top:826px;width:1843px;height:43px;background:#ee5555;"></div>
<div style="left:54px;top:826px;width:1px;height:43px;background:#e4e8ee;"></div>
<div style="left:67px;top:826px;width:87px;height:43px;background:#b5f5fd;"></div>
<div style="left:1878px;top:826px;width:20px;height:43px;background:#b5f5fd;"></div>
<div style="left:1898px;top:826px;width:1px;height:43px;background:#e6e0f0;"></div>
<div style="left:5px;top:869px;width:50px;height:2px;background:#d6d6d6;"></div>
<div style="left:55px;top:869px;width:1844px;height:2px;background:#e4dedf;"></div>
<div style="left:54px;top:869px;width:1px;height:2px;background:#d8e6ea;"></div>
<svg style="left:295.0px;top:830px;" width="12" height="16" viewBox="0 0 12 16"><path d="M2.2 .75H7.3L11.25 4.7V13.8a1.5 1.5 0 0 1-1.5 1.5H2.2a1.5 1.5 0 0 1-1.5-1.5V2.25a1.5 1.5 0 0 1 1.5-1.5z" fill="none" stroke="#fff" stroke-width="1.45" stroke-linejoin="round"/><path d="M6.8 1v3.6h3.9" fill="none" stroke="#fff" stroke-width="1.2"/><path d="M3.2 8.4h5.6M3.2 10.9h5.6" stroke="#fff" stroke-width="1.35"/></svg>
<div style="left:1576px;top:834px;width:75px;height:26px;background:#aaaaaa;border-radius:13px;"></div>
<div style="left:1654px;top:834px;width:28px;height:26px;background:#aaaaaa;border-radius:13px;"></div>
<div style="left:1686px;top:834px;width:29px;height:26px;background:#dc3250;border-radius:13px;"></div>
<div style="left:1718px;top:834px;width:28px;height:26px;background:#aaaaaa;border-radius:13px;"></div>
<div style="left:1750px;top:834px;width:24px;height:26px;background:#aaaaaa;border-radius:13px;"></div>
<div style="left:1777px;top:834px;width:29px;height:26px;background:#00a65a;border-radius:13px;"></div>
<div style="left:1809px;top:834px;width:28px;height:26px;background:#ff7701;border-radius:13px;"></div>
<div style="left:1840px;top:834px;width:33px;height:26px;background:#3c8dbc;border-radius:13px;"></div>
<svg style="left:1850px;top:839px;" width="13.3" height="13" viewBox="0 0 13 13"><path d="M0 0h13v8.6L8.6 13H0z" fill="#fff"/><path d="M8.6 13V8.6H13z" fill="#e4e6fa" stroke="#b9b4e6" stroke-width=".6"/></svg>
<div style="left:55px;top:871px;width:1843px;height:43px;background:#5ce6f9;"></div>
<div style="left:54px;top:871px;width:1px;height:43px;background:#e4e8ee;"></div>
<div style="left:67px;top:871px;width:87px;height:43px;background:#64c4ed;"></div>
<div style="left:1878px;top:871px;width:20px;height:43px;background:#64c4ed;"></div>
<div style="left:1898px;top:871px;width:1px;height:43px;background:#e6e0f0;"></div>
<div style="left:5px;top:914px;width:50px;height:2px;background:#d6d6d6;"></div>
<div style="left:55px;top:914px;width:1844px;height:2px;background:#e4dedf;"></div>
<div style="left:54px;top:914px;width:1px;height:2px;background:#d8e6ea;"></div>
<svg style="left:295.0px;top:875px;" width="12" height="16" viewBox="0 0 12 16"><path d="M2.2 .75H7.3L11.25 4.7V13.8a1.5 1.5 0 0 1-1.5 1.5H2.2a1.5 1.5 0 0 1-1.5-1.5V2.25a1.5 1.5 0 0 1 1.5-1.5z" fill="none" stroke="#000" stroke-width="1.45" stroke-linejoin="round"/><path d="M6.8 1v3.6h3.9" fill="none" stroke="#000" stroke-width="1.2"/><path d="M3.2 8.4h5.6M3.2 10.9h5.6" stroke="#000" stroke-width="1.35"/></svg>
<div style="left:1576px;top:879px;width:75px;height:26px;background:#aaaaaa;border-radius:13px;"></div>
<div style="left:1654px;top:879px;width:28px;height:26px;background:#aaaaaa;border-radius:13px;"></div>
<div style="left:1686px;top:879px;width:29px;height:26px;background:#dc3250;border-radius:13px;"></div>
<div style="left:1718px;top:879px;width:28px;height:26px;background:#aaaaaa;border-radius:13px;"></div>
<div style="left:1750px;top:879px;width:24px;height:26px;background:#aaaaaa;border-radius:13px;"></div>
<div style="left:1777px;top:879px;width:29px;height:26px;background:#00a65a;border-radius:13px;"></div>
<div style="left:1809px;top:879px;width:28px;height:26px;background:#ff7701;border-radius:13px;"></div>
<div style="left:1840px;top:879px;width:33px;height:26px;background:#3c8dbc;border-radius:13px;"></div>
<svg style="left:1850px;top:884px;" width="13.3" height="13" viewBox="0 0 13 13"><path d="M0 0h13v8.6L8.6 13H0z" fill="#fff"/><path d="M8.6 13V8.6H13z" fill="#e4e6fa" stroke="#b9b4e6" stroke-width=".6"/></svg>
<div style="left:55px;top:916px;width:1843px;height:43px;background:#5ce6f9;"></div>
<div style="left:54px;top:916px;width:1px;height:43px;background:#e4e8ee;"></div>
<div style="left:67px;top:916px;width:87px;height:43px;background:#d7e31a;"></div>
<div style="left:1878px;top:916px;width:20px;height:43px;background:#d7e31a;"></div>
<div style="left:1898px;top:916px;width:1px;height:43px;background:#e6e0f0;"></div>
<div style="left:5px;top:959px;width:50px;height:2px;background:#d6d6d6;"></div>
<div style="left:55px;top:959px;width:1844px;height:2px;background:#e4dedf;"></div>
<div style="left:54px;top:959px;width:1px;height:2px;background:#d8e6ea;"></div>
<svg style="left:295.0px;top:920px;" width="12" height="16" viewBox="0 0 12 16"><path d="M2.2 .75H7.3L11.25 4.7V13.8a1.5 1.5 0 0 1-1.5 1.5H2.2a1.5 1.5 0 0 1-1.5-1.5V2.25a1.5 1.5 0 0 1 1.5-1.5z" fill="none" stroke="#000" stroke-width="1.45" stroke-linejoin="round"/><path d="M6.8 1v3.6h3.9" fill="none" stroke="#000" stroke-width="1.2"/><path d="M3.2 8.4h5.6M3.2 10.9h5.6" stroke="#000" stroke-width="1.35"/></svg>
<div style="left:1576px;top:924px;width:75px;height:26px;background:#aaaaaa;border-radius:13px;"></div>
<div style="left:1654px;top:924px;width:28px;height:26px;background:#aaaaaa;border-radius:13px;"></div>
<div style="left:1686px;top:924px;width:29px;height:26px;background:#dc3250;border-radius:13px;"></div>
<div style="left:1718px;top:924px;width:28px;height:26px;background:#aaaaaa;border-radius:13px;"></div>
<div style="left:1750px;top:924px;width:24px;height:26px;background:#aaaaaa;border-radius:13px;"></div>
<div style="left:1777px;top:924px;width:29px;height:26px;background:#dd4b39;border-radius:13px;"></div>
<div style="left:1809px;top:924px;width:28px;height:26px;background:#ff7701;border-radius:13px;"></div>
<div style="left:1840px;top:924px;width:33px;height:26px;background:#3c8dbc;border-radius:13px;"></div>
<svg style="left:1850px;top:929px;" width="13.3" height="13" viewBox="0 0 13 13"><path d="M0 0h13v8.6L8.6 13H0z" fill="#fff"/><path d="M8.6 13V8.6H13z" fill="#e4e6fa" stroke="#b9b4e6" stroke-width=".6"/></svg>
<div style="left:1899px;top:107px;width:4px;height:854px;background:#fff;"></div>
<div style="left:1903px;top:107px;width:16px;height:854px;background:#f1f1f1;"></div>
<svg style="left:1908px;top:113.8px;" width="7.4" height="4.2" viewBox="0 0 7.4 4.2"><path d="M0 4.2h7.4L3.7 0z" fill="#505050"/></svg>
<svg style="left:1908px;top:950.2px;" width="7.4" height="4.2" viewBox="0 0 7.4 4.2"><path d="M0 0h7.4L3.7 4.2z" fill="#505050"/></svg>
<div style="left:1905px;top:128px;width:13px;height:319px;background:#c1c1c1;"></div>
<span class="t" style="left:210.00px;top:15.80px;font-size:15.0px;color:#fff;letter-spacing:0.066px;">Diary</span>
<span class="t" style="left:275.50px;top:15.80px;font-size:15.0px;color:#fff;letter-spacing:-0.175px;">Theatre Manager</span>
<span class="t" style="left:418.00px;top:15.80px;font-size:15.0px;color:#fff;letter-spacing:-0.055px;">Dashboard</span>
<span class="t" style="left:521.00px;top:15.80px;font-size:15.0px;color:#fff;letter-spacing:0.216px;">Patient Identifier</span>
<span class="t" style="left:663.00px;top:15.80px;font-size:15.0px;color:#fff;letter-spacing:-0.052px;">Clinical Reports</span>
<span class="t" style="left:797.00px;top:15.80px;font-size:15.0px;color:#fff;letter-spacing:-0.020px;">Hospital Round Management</span>
<span class="t" style="left:1420.00px;top:15.80px;font-size:15.0px;color:#fff;letter-spacing:-1.147px;">1-DOCSTEAM2GP</span>
<span class="t" style="left:1584.50px;top:15.80px;font-size:15.0px;color:#fff;letter-spacing:-0.308px;">Docspan User</span>
<span class="t" style="left:1768.00px;top:15.80px;font-size:15.0px;color:#fff;letter-spacing:0.281px;">About</span>
<span class="t" style="left:1858.50px;top:15.80px;font-size:15.0px;color:#fff;letter-spacing:0.200px;">Logout</span>
<span class="t" style="left:31.00px;top:68.80px;font-size:15.0px;color:#111;letter-spacing:-0.365px;">Dr DocSpan</span>
<span class="t" style="left:144.50px;top:68.80px;font-size:15.0px;color:#111;letter-spacing:-0.012px;">Display Options</span>
<span class="t" style="left:1429.50px;top:68.80px;font-size:15.0px;color:#111;letter-spacing:-0.141px;">Diary Types</span>
<span class="t" style="left:1544.50px;top:68.80px;font-size:15.0px;color:#111;letter-spacing:-0.188px;">Render Policies</span>
<span class="t" style="left:265.00px;top:67.60px;font-size:11.25px;color:#777;letter-spacing:0.012px;">Filter bookings ...</span>
<span class="t" style="left:749.00px;top:69.02px;font-size:17.25px;color:#555;letter-spacing:-0.161px;">Thu 13th Apr 2023</span>
<span class="t" style="left:934.00px;top:68.89px;font-size:13.0px;color:#444;letter-spacing:0.328px;">Now</span>
<span class="t" style="left:1785.60px;top:68.11px;font-size:17.0px;color:#fff;font-weight:700;">?</span>
<span class="t" style="left:1837.00px;top:68.10px;font-size:11.25px;color:#fff;font-weight:700;letter-spacing:-0.320px;">New Booking</span>
<span class="t" style="left:10.00px;top:110.10px;font-size:11.25px;color:#222;letter-spacing:-0.324px;">08:00</span>
<span class="t" style="left:67.40px;top:108.80px;font-size:15.0px;color:#222;letter-spacing:-0.219px;">Done</span>
<span class="t" style="left:67.40px;top:127.80px;font-size:15.0px;color:#222;letter-spacing:0.045px;">Follow Up</span>
<span class="t" style="left:242.00px;top:108.80px;font-size:15.0px;color:#000;letter-spacing:-1.129px;">GPD69</span>
<span class="t" style="left:298.32px;top:108.80px;font-size:15.0px;color:#000;letter-spacing:-0.770px;">ROO000004</span>
<span class="t" style="left:376.90px;top:108.80px;font-size:15.0px;color:#000;font-weight:700;letter-spacing:-0.650px;">MISS MOORE, P, POPPY</span>
<span class="t" style="left:376.90px;top:127.80px;font-size:15.0px;color:#000;letter-spacing:-0.507px;">0000000000 F Age: 21 years</span>
<span class="t" style="left:776.77px;top:108.80px;font-size:15.0px;color:#000;letter-spacing:-1.279px;">DOCTOR:</span>
<span class="t" style="left:776.77px;top:127.80px;font-size:15.0px;color:#000;letter-spacing:-0.474px;">DR B Kopjies</span>
<span class="t" style="left:1587.12px;top:116.99px;font-size:13.0px;color:#fff;font-weight:700;letter-spacing:-0.482px;">COVID19</span>
<span class="t" style="left:1663.30px;top:116.99px;font-size:13.0px;color:#fff;font-weight:700;">C</span>
<span class="t" style="left:1695.80px;top:116.99px;font-size:13.0px;color:#fff;font-weight:700;">D</span>
<span class="t" style="left:1727.66px;top:116.99px;font-size:13.0px;color:#fff;font-weight:700;">S</span>
<span class="t" style="left:1760.19px;top:116.99px;font-size:13.0px;color:#fff;font-weight:700;">I</span>
<span class="t" style="left:1786.80px;top:116.99px;font-size:13.0px;color:#fff;font-weight:700;">A</span>
<span class="t" style="left:1818.66px;top:116.99px;font-size:13.0px;color:#fff;font-weight:700;">V</span>
<span class="t" style="left:10.00px;top:155.10px;font-size:11.25px;color:#222;letter-spacing:-0.324px;">08:15</span>
<span class="t" style="left:67.40px;top:153.80px;font-size:15.0px;color:#222;letter-spacing:0.097px;">Cancellation</span>
<span class="t" style="left:67.40px;top:172.80px;font-size:15.0px;color:#222;letter-spacing:0.213px;">Consultation</span>
<span class="t" style="left:242.00px;top:153.80px;font-size:15.0px;color:#fff;letter-spacing:-1.129px;">GPD71</span>
<span class="t" style="left:298.32px;top:153.80px;font-size:15.0px;color:#fff;letter-spacing:-0.770px;">ROO000009</span>
<span class="t" style="left:376.90px;top:153.80px;font-size:15.0px;color:#fff;font-weight:700;letter-spacing:-0.745px;">MR FABIEN, M, MALCOLM</span>
<span class="t" style="left:376.90px;top:172.80px;font-size:15.0px;color:#fff;letter-spacing:-0.507px;">0762222220 F Age: 30 years</span>
<span class="t" style="left:776.77px;top:153.80px;font-size:15.0px;color:#fff;letter-spacing:-1.279px;">DOCTOR:</span>
<span class="t" style="left:776.77px;top:172.80px;font-size:15.0px;color:#fff;letter-spacing:-0.625px;">DR D Docspan</span>
<span class="t" style="left:1587.12px;top:161.99px;font-size:13.0px;color:#fff;font-weight:700;letter-spacing:-0.482px;">COVID19</span>
<span class="t" style="left:1663.30px;top:161.99px;font-size:13.0px;color:#fff;font-weight:700;">C</span>
<span class="t" style="left:1695.80px;top:161.99px;font-size:13.0px;color:#fff;font-weight:700;">D</span>
<span class="t" style="left:1727.66px;top:161.99px;font-size:13.0px;color:#fff;font-weight:700;">S</span>
<span class="t" style="left:1760.19px;top:161.99px;font-size:13.0px;color:#fff;font-weight:700;">I</span>
<span class="t" style="left:1786.80px;top:161.99px;font-size:13.0px;color:#fff;font-weight:700;">A</span>
<span class="t" style="left:1818.66px;top:161.99px;font-size:13.0px;color:#fff;font-weight:700;">V</span>
<span class="t" style="left:10.00px;top:200.10px;font-size:11.25px;color:#222;letter-spacing:-0.324px;">08:30</span>
<span class="t" style="left:67.40px;top:198.80px;font-size:15.0px;color:#222;letter-spacing:-0.219px;">Done</span>
<span class="t" style="left:67.40px;top:217.80px;font-size:15.0px;color:#222;letter-spacing:0.213px;">Consultation</span>
<span class="t" style="left:242.00px;top:198.80px;font-size:15.0px;color:#000;letter-spacing:-0.984px;">GPD102</span>
<span class="t" style="left:306.59px;top:198.80px;font-size:15.0px;color:#000;letter-spacing:0.328px;">11</span>
<span class="t" style="left:323.00px;top:198.80px;font-size:15.0px;color:#000;font-weight:700;letter-spacing:-0.608px;">MR WILLIAMS, L, LEON</span>
<span class="t" style="left:323.00px;top:217.80px;font-size:15.0px;color:#000;letter-spacing:-0.491px;">0820000901 M Age: 42 years</span>
<span class="t" style="left:740.83px;top:198.80px;font-size:15.0px;color:#000;letter-spacing:-1.279px;">DOCTOR:</span>
<span class="t" style="left:740.83px;top:217.80px;font-size:15.0px;color:#000;letter-spacing:-0.625px;">DR D Docspan</span>
<span class="t" style="left:1587.12px;top:206.99px;font-size:13.0px;color:#fff;font-weight:700;letter-spacing:-0.482px;">COVID19</span>
<span class="t" style="left:1663.30px;top:206.99px;font-size:13.0px;color:#fff;font-weight:700;">C</span>
<span class="t" style="left:1695.80px;top:206.99px;font-size:13.0px;color:#fff;font-weight:700;">D</span>
<span class="t" style="left:1727.66px;top:206.99px;font-size:13.0px;color:#fff;font-weight:700;">S</span>
<span class="t" style="left:1760.19px;top:206.99px;font-size:13.0px;color:#fff;font-weight:700;">I</span>
<span class="t" style="left:1786.80px;top:206.99px;font-size:13.0px;color:#fff;font-weight:700;">A</span>
<span class="t" style="left:1818.66px;top:206.99px;font-size:13.0px;color:#fff;font-weight:700;">V</span>
<span class="t" style="left:10.00px;top:245.10px;font-size:11.25px;color:#222;letter-spacing:-0.324px;">08:45</span>
<span class="t" style="left:67.40px;top:243.80px;font-size:15.0px;color:#222;letter-spacing:-0.219px;">Done</span>
<span class="t" style="left:67.40px;top:262.80px;font-size:15.0px;color:#222;letter-spacing:-0.112px;">Walk-In</span>
<span class="t" style="left:242.00px;top:243.80px;font-size:15.0px;color:#000;letter-spacing:-1.129px;">GPD55</span>
<span class="t" style="left:299.11px;top:243.80px;font-size:15.0px;color:#000;letter-spacing:-0.330px;"> No File Nr</span>
<span class="t" style="left:368.00px;top:243.80px;font-size:15.0px;color:#000;font-weight:700;letter-spacing:-0.519px;">MR TURNER, T, TIMOTHY</span>
<span class="t" style="left:368.00px;top:262.80px;font-size:15.0px;color:#000;letter-spacing:-0.491px;">0987654321 M Age: 26 years</span>
<span class="t" style="left:770.83px;top:243.80px;font-size:15.0px;color:#000;letter-spacing:-1.279px;">DOCTOR:</span>
<span class="t" style="left:770.83px;top:262.80px;font-size:15.0px;color:#000;letter-spacing:-0.625px;">DR D Docspan</span>
<span class="t" style="left:1587.12px;top:251.99px;font-size:13.0px;color:#fff;font-weight:700;letter-spacing:-0.482px;">COVID19</span>
<span class="t" style="left:1663.30px;top:251.99px;font-size:13.0px;color:#fff;font-weight:700;">C</span>
<span class="t" style="left:1695.80px;top:251.99px;font-size:13.0px;color:#fff;font-weight:700;">D</span>
<span class="t" style="left:1727.66px;top:251.99px;font-size:13.0px;color:#fff;font-weight:700;">S</span>
<span class="t" style="left:1760.19px;top:251.99px;font-size:13.0px;color:#fff;font-weight:700;">I</span>
<span class="t" style="left:1786.80px;top:251.99px;font-size:13.0px;color:#fff;font-weight:700;">A</span>
<span class="t" style="left:1818.66px;top:251.99px;font-size:13.0px;color:#fff;font-weight:700;">V</span>
<span class="t" style="left:10.00px;top:290.10px;font-size:11.25px;color:#222;letter-spacing:-0.324px;">09:00</span>
<span class="t" style="left:67.40px;top:288.80px;font-size:15.0px;color:#222;letter-spacing:-0.219px;">Done</span>
<span class="t" style="left:67.40px;top:307.80px;font-size:15.0px;color:#222;letter-spacing:0.213px;">Consultation</span>
<span class="t" style="left:242.00px;top:288.80px;font-size:15.0px;color:#000;letter-spacing:-0.984px;">GPD108</span>
<span class="t" style="left:306.42px;top:288.80px;font-size:15.0px;color:#000;letter-spacing:-0.770px;">ROO000030</span>
<span class="t" style="left:385.00px;top:288.80px;font-size:15.0px;color:#000;font-weight:700;letter-spacing:-0.685px;">MR GALLAGHER, P, PHILLIP</span>
<span class="t" style="left:385.00px;top:307.80px;font-size:15.0px;color:#000;letter-spacing:-0.491px;">0846279846 M Age: 27 years</span>
<span class="t" style="left:782.17px;top:288.80px;font-size:15.0px;color:#000;letter-spacing:-1.279px;">DOCTOR:</span>
<span class="t" style="left:782.17px;top:307.80px;font-size:15.0px;color:#000;letter-spacing:-0.625px;">DR D Docspan</span>
<span class="t" style="left:1587.12px;top:296.99px;font-size:13.0px;color:#fff;font-weight:700;letter-spacing:-0.482px;">COVID19</span>
<span class="t" style="left:1663.30px;top:296.99px;font-size:13.0px;color:#fff;font-weight:700;">C</span>
<span class="t" style="left:1695.80px;top:296.99px;font-size:13.0px;color:#fff;font-weight:700;">D</span>
<span class="t" style="left:1727.66px;top:296.99px;font-size:13.0px;color:#fff;font-weight:700;">S</span>
<span class="t" style="left:1760.19px;top:296.99px;font-size:13.0px;color:#fff;font-weight:700;">I</span>
<span class="t" style="left:1786.80px;top:296.99px;font-size:13.0px;color:#fff;font-weight:700;">A</span>
<span class="t" style="left:1818.66px;top:296.99px;font-size:13.0px;color:#fff;font-weight:700;">V</span>
<span class="t" style="left:10.00px;top:335.10px;font-size:11.25px;color:#222;letter-spacing:-0.324px;">09:15</span>
<span class="t" style="left:67.40px;top:333.80px;font-size:15.0px;color:#222;letter-spacing:-0.219px;">Done</span>
<span class="t" style="left:67.40px;top:352.80px;font-size:15.0px;color:#222;letter-spacing:-0.365px;">Insurance Ex</span>
<span class="t" style="left:242.00px;top:333.80px;font-size:15.0px;color:#000;letter-spacing:-0.984px;">GPD103</span>
<span class="t" style="left:306.69px;top:333.80px;font-size:15.0px;color:#000;letter-spacing:-0.656px;">HOS000003</span>
<span class="t" style="left:384.50px;top:333.80px;font-size:15.0px;color:#000;font-weight:700;letter-spacing:-0.841px;">MR KELLER, X, XANDER</span>
<span class="t" style="left:384.50px;top:352.80px;font-size:15.0px;color:#000;letter-spacing:-0.491px;">0761234567 M Age: 32 years</span>
<span class="t" style="left:781.83px;top:333.80px;font-size:15.0px;color:#000;letter-spacing:-1.279px;">DOCTOR:</span>
<span class="t" style="left:781.83px;top:352.80px;font-size:15.0px;color:#000;letter-spacing:-0.625px;">DR D Docspan</span>
<span class="t" style="left:1587.12px;top:341.99px;font-size:13.0px;color:#fff;font-weight:700;letter-spacing:-0.482px;">COVID19</span>
<span class="t" style="left:1663.30px;top:341.99px;font-size:13.0px;color:#fff;font-weight:700;">C</span>
<span class="t" style="left:1695.80px;top:341.99px;font-size:13.0px;color:#fff;font-weight:700;">D</span>
<span class="t" style="left:1727.66px;top:341.99px;font-size:13.0px;color:#fff;font-weight:700;">S</span>
<span class="t" style="left:1760.19px;top:341.99px;font-size:13.0px;color:#fff;font-weight:700;">I</span>
<span class="t" style="left:1786.80px;top:341.99px;font-size:13.0px;color:#fff;font-weight:700;">A</span>
<span class="t" style="left:1818.66px;top:341.99px;font-size:13.0px;color:#fff;font-weight:700;">V</span>
<span class="t" style="left:10.00px;top:380.10px;font-size:11.25px;color:#222;letter-spacing:-0.324px;">09:30</span>
<span class="t" style="left:67.40px;top:378.80px;font-size:15.0px;color:#222;letter-spacing:-0.219px;">Done</span>
<span class="t" style="left:67.40px;top:397.80px;font-size:15.0px;color:#222;letter-spacing:0.213px;">Consultation</span>
<span class="t" style="left:242.00px;top:378.80px;font-size:15.0px;color:#000;letter-spacing:-0.984px;">GPD106</span>
<span class="t" style="left:306.42px;top:378.80px;font-size:15.0px;color:#000;letter-spacing:-0.770px;">ROO000027</span>
<span class="t" style="left:385.00px;top:378.80px;font-size:15.0px;color:#000;font-weight:700;letter-spacing:-0.773px;">MR WRIGHT, C, CHARLES</span>
<span class="t" style="left:385.00px;top:397.80px;font-size:15.0px;color:#000;letter-spacing:-0.491px;">0721234567 M Age: 47 years</span>
<span class="t" style="left:782.17px;top:378.80px;font-size:15.0px;color:#000;letter-spacing:-1.279px;">DOCTOR:</span>
<span class="t" style="left:782.17px;top:397.80px;font-size:15.0px;color:#000;letter-spacing:-0.625px;">DR D Docspan</span>
<span class="t" style="left:1587.12px;top:386.99px;font-size:13.0px;color:#fff;font-weight:700;letter-spacing:-0.482px;">COVID19</span>
<span class="t" style="left:1663.30px;top:386.99px;font-size:13.0px;color:#fff;font-weight:700;">C</span>
<span class="t" style="left:1695.80px;top:386.99px;font-size:13.0px;color:#fff;font-weight:700;">D</span>
<span class="t" style="left:1727.66px;top:386.99px;font-size:13.0px;color:#fff;font-weight:700;">S</span>
<span class="t" style="left:1760.19px;top:386.99px;font-size:13.0px;color:#fff;font-weight:700;">I</span>
<span class="t" style="left:1786.80px;top:386.99px;font-size:13.0px;color:#fff;font-weight:700;">A</span>
<span class="t" style="left:1818.66px;top:386.99px;font-size:13.0px;color:#fff;font-weight:700;">V</span>
<span class="t" style="left:10.00px;top:425.10px;font-size:11.25px;color:#222;letter-spacing:-0.324px;">09:45</span>
<span class="t" style="left:67.40px;top:423.80px;font-size:15.0px;color:#222;letter-spacing:0.097px;">Cancellation</span>
<span class="t" style="left:67.40px;top:442.80px;font-size:15.0px;color:#222;letter-spacing:0.045px;">Follow Up</span>
<span class="t" style="left:242.00px;top:423.80px;font-size:15.0px;color:#fff;letter-spacing:-0.984px;">GPD107</span>
<span class="t" style="left:306.42px;top:423.80px;font-size:15.0px;color:#fff;letter-spacing:-0.770px;">ROO000029</span>
<span class="t" style="left:385.00px;top:423.80px;font-size:15.0px;color:#fff;font-weight:700;letter-spacing:-0.677px;">MISS SIEBRITS, XAR, XANTE AMELIA RUTH</span>
<span class="t" style="left:385.00px;top:442.80px;font-size:15.0px;color:#fff;letter-spacing:-0.507px;">0817650595 F Age: 34 years</span>
<span class="t" style="left:782.17px;top:423.80px;font-size:15.0px;color:#fff;letter-spacing:-1.279px;">DOCTOR:</span>
<span class="t" style="left:782.17px;top:442.80px;font-size:15.0px;color:#fff;letter-spacing:-0.625px;">DR D Docspan</span>
<span class="t" style="left:1587.12px;top:431.99px;font-size:13.0px;color:#fff;font-weight:700;letter-spacing:-0.482px;">COVID19</span>
<span class="t" style="left:1663.30px;top:431.99px;font-size:13.0px;color:#fff;font-weight:700;">C</span>
<span class="t" style="left:1695.80px;top:431.99px;font-size:13.0px;color:#fff;font-weight:700;">D</span>
<span class="t" style="left:1727.66px;top:431.99px;font-size:13.0px;color:#fff;font-weight:700;">S</span>
<span class="t" style="left:1760.19px;top:431.99px;font-size:13.0px;color:#fff;font-weight:700;">I</span>
<span class="t" style="left:1786.80px;top:431.99px;font-size:13.0px;color:#fff;font-weight:700;">A</span>
<span class="t" style="left:1818.66px;top:431.99px;font-size:13.0px;color:#fff;font-weight:700;">V</span>
<span class="t" style="left:10.00px;top:470.10px;font-size:11.25px;color:#222;letter-spacing:-0.324px;">10:00</span>
<span class="t" style="left:67.40px;top:468.80px;font-size:15.0px;color:#222;letter-spacing:-0.219px;">Done</span>
<span class="t" style="left:67.40px;top:487.80px;font-size:15.0px;color:#222;letter-spacing:0.213px;">Consultation</span>
<span class="t" style="left:242.00px;top:468.80px;font-size:15.0px;color:#000;letter-spacing:-1.129px;">GPD17</span>
<span class="t" style="left:298.52px;top:468.80px;font-size:15.0px;color:#000;letter-spacing:-0.801px;">MOU26</span>
<span class="t" style="left:347.50px;top:468.80px;font-size:15.0px;color:#000;font-weight:700;letter-spacing:-0.697px;">MS MOOREHOUSE , A, ANNE</span>
<span class="t" style="left:347.50px;top:487.80px;font-size:15.0px;color:#000;letter-spacing:-0.507px;">0645155899 F Age: 53 years</span>
<span class="t" style="left:757.17px;top:468.80px;font-size:15.0px;color:#000;letter-spacing:-1.279px;">DOCTOR:</span>
<span class="t" style="left:757.17px;top:487.80px;font-size:15.0px;color:#000;letter-spacing:-0.625px;">DR D Docspan</span>
<span class="t" style="left:1587.12px;top:476.99px;font-size:13.0px;color:#fff;font-weight:700;letter-spacing:-0.482px;">COVID19</span>
<span class="t" style="left:1663.30px;top:476.99px;font-size:13.0px;color:#fff;font-weight:700;">C</span>
<span class="t" style="left:1695.80px;top:476.99px;font-size:13.0px;color:#fff;font-weight:700;">D</span>
<span class="t" style="left:1727.66px;top:476.99px;font-size:13.0px;color:#fff;font-weight:700;">S</span>
<span class="t" style="left:1760.19px;top:476.99px;font-size:13.0px;color:#fff;font-weight:700;">I</span>
<span class="t" style="left:1786.80px;top:476.99px;font-size:13.0px;color:#fff;font-weight:700;">A</span>
<span class="t" style="left:1818.66px;top:476.99px;font-size:13.0px;color:#fff;font-weight:700;">V</span>
<span class="t" style="left:10.00px;top:515.10px;font-size:11.25px;color:#222;letter-spacing:-0.324px;">10:15</span>
<span class="t" style="left:67.40px;top:513.80px;font-size:15.0px;color:#222;letter-spacing:-0.219px;">Done</span>
<span class="t" style="left:67.40px;top:532.80px;font-size:15.0px;color:#222;letter-spacing:0.213px;">Consultation</span>
<span class="t" style="left:242.00px;top:513.80px;font-size:15.0px;color:#000;letter-spacing:-0.984px;">GPD108</span>
<span class="t" style="left:306.42px;top:513.80px;font-size:15.0px;color:#000;letter-spacing:-0.770px;">ROO000030</span>
<span class="t" style="left:385.00px;top:513.80px;font-size:15.0px;color:#000;font-weight:700;letter-spacing:-0.685px;">MR GALLAGHER, P, PHILLIP</span>
<span class="t" style="left:385.00px;top:532.80px;font-size:15.0px;color:#000;letter-spacing:-0.491px;">0846279846 M Age: 27 years</span>
<span class="t" style="left:782.17px;top:513.80px;font-size:15.0px;color:#000;letter-spacing:-1.279px;">DOCTOR:</span>
<span class="t" style="left:782.17px;top:532.80px;font-size:15.0px;color:#000;letter-spacing:-0.625px;">DR D Docspan</span>
<span class="t" style="left:1587.12px;top:521.99px;font-size:13.0px;color:#fff;font-weight:700;letter-spacing:-0.482px;">COVID19</span>
<span class="t" style="left:1663.30px;top:521.99px;font-size:13.0px;color:#fff;font-weight:700;">C</span>
<span class="t" style="left:1695.80px;top:521.99px;font-size:13.0px;color:#fff;font-weight:700;">D</span>
<span class="t" style="left:1727.66px;top:521.99px;font-size:13.0px;color:#fff;font-weight:700;">S</span>
<span class="t" style="left:1760.19px;top:521.99px;font-size:13.0px;color:#fff;font-weight:700;">I</span>
<span class="t" style="left:1786.80px;top:521.99px;font-size:13.0px;color:#fff;font-weight:700;">A</span>
<span class="t" style="left:1818.66px;top:521.99px;font-size:13.0px;color:#fff;font-weight:700;">V</span>
<span class="t" style="left:10.00px;top:560.10px;font-size:11.25px;color:#222;letter-spacing:-0.324px;">10:30</span>
<span class="t" style="left:67.40px;top:558.80px;font-size:15.0px;color:#222;letter-spacing:0.097px;">Cancellation</span>
<span class="t" style="left:67.40px;top:577.80px;font-size:15.0px;color:#222;letter-spacing:0.213px;">Consultation</span>
<span class="t" style="left:242.00px;top:558.80px;font-size:15.0px;color:#fff;letter-spacing:-0.984px;">GPD105</span>
<span class="t" style="left:306.69px;top:558.80px;font-size:15.0px;color:#fff;letter-spacing:-0.656px;">HOS000004</span>
<span class="t" style="left:384.50px;top:558.80px;font-size:15.0px;color:#fff;font-weight:700;letter-spacing:-0.690px;">MR LANGENHOVEN, L, LOUIS</span>
<span class="t" style="left:384.50px;top:577.80px;font-size:15.0px;color:#fff;letter-spacing:-0.487px;">06714982220 M Age: 39 years</span>
<span class="t" style="left:781.83px;top:558.80px;font-size:15.0px;color:#fff;letter-spacing:-1.279px;">DOCTOR:</span>
<span class="t" style="left:781.83px;top:577.80px;font-size:15.0px;color:#fff;letter-spacing:-0.625px;">DR D Docspan</span>
<span class="t" style="left:1587.12px;top:566.99px;font-size:13.0px;color:#fff;font-weight:700;letter-spacing:-0.482px;">COVID19</span>
<span class="t" style="left:1663.30px;top:566.99px;font-size:13.0px;color:#fff;font-weight:700;">C</span>
<span class="t" style="left:1695.80px;top:566.99px;font-size:13.0px;color:#fff;font-weight:700;">D</span>
<span class="t" style="left:1727.66px;top:566.99px;font-size:13.0px;color:#fff;font-weight:700;">S</span>
<span class="t" style="left:1760.19px;top:566.99px;font-size:13.0px;color:#fff;font-weight:700;">I</span>
<span class="t" style="left:1786.80px;top:566.99px;font-size:13.0px;color:#fff;font-weight:700;">A</span>
<span class="t" style="left:1818.66px;top:566.99px;font-size:13.0px;color:#fff;font-weight:700;">V</span>
<span class="t" style="left:10.00px;top:605.10px;font-size:11.25px;color:#222;letter-spacing:-0.324px;">10:45</span>
<span class="t" style="left:67.40px;top:603.80px;font-size:15.0px;color:#222;letter-spacing:0.090px;">In Consultati</span>
<span class="t" style="left:67.40px;top:622.80px;font-size:15.0px;color:#222;letter-spacing:0.750px;">on</span>
<span class="t" style="left:242.00px;top:603.80px;font-size:15.0px;color:#000;letter-spacing:-0.984px;">GPD109</span>
<span class="t" style="left:306.42px;top:603.80px;font-size:15.0px;color:#000;letter-spacing:-0.770px;">ROO000031</span>
<span class="t" style="left:385.00px;top:603.80px;font-size:15.0px;color:#000;font-weight:700;letter-spacing:-0.802px;">MR ALLEN, B, BARTHOLOMEW</span>
<span class="t" style="left:385.00px;top:622.80px;font-size:15.0px;color:#000;letter-spacing:-0.487px;">08476128464 M Age: 28 years</span>
<span class="t" style="left:782.17px;top:603.80px;font-size:15.0px;color:#000;letter-spacing:-1.279px;">DOCTOR:</span>
<span class="t" style="left:782.17px;top:622.80px;font-size:15.0px;color:#000;letter-spacing:-0.625px;">DR D Docspan</span>
<span class="t" style="left:1587.12px;top:611.99px;font-size:13.0px;color:#fff;font-weight:700;letter-spacing:-0.482px;">COVID19</span>
<span class="t" style="left:1663.30px;top:611.99px;font-size:13.0px;color:#fff;font-weight:700;">C</span>
<span class="t" style="left:1695.80px;top:611.99px;font-size:13.0px;color:#fff;font-weight:700;">D</span>
<span class="t" style="left:1727.66px;top:611.99px;font-size:13.0px;color:#fff;font-weight:700;">S</span>
<span class="t" style="left:1760.19px;top:611.99px;font-size:13.0px;color:#fff;font-weight:700;">I</span>
<span class="t" style="left:1786.80px;top:611.99px;font-size:13.0px;color:#fff;font-weight:700;">A</span>
<span class="t" style="left:1818.66px;top:611.99px;font-size:13.0px;color:#fff;font-weight:700;">V</span>
<span class="t" style="left:10.00px;top:650.10px;font-size:11.25px;color:#222;letter-spacing:-0.117px;">11:00</span>
<span class="t" style="left:67.40px;top:648.80px;font-size:15.0px;color:#222;letter-spacing:0.076px;">Arrived</span>
<span class="t" style="left:67.40px;top:667.80px;font-size:15.0px;color:#222;letter-spacing:0.213px;">Consultation</span>
<span class="t" style="left:242.00px;top:648.80px;font-size:15.0px;color:#000;letter-spacing:-0.759px;">GPD110</span>
<span class="t" style="left:306.42px;top:648.80px;font-size:15.0px;color:#000;letter-spacing:-0.770px;">ROO000032</span>
<span class="t" style="left:385.00px;top:648.80px;font-size:15.0px;color:#000;font-weight:700;letter-spacing:-0.726px;">MR WILLIAMS, K, KYLE</span>
<span class="t" style="left:385.00px;top:667.80px;font-size:15.0px;color:#000;letter-spacing:-0.495px;">123456789 M Age: 20 years</span>
<span class="t" style="left:782.17px;top:648.80px;font-size:15.0px;color:#000;letter-spacing:-1.279px;">DOCTOR:</span>
<span class="t" style="left:782.17px;top:667.80px;font-size:15.0px;color:#000;letter-spacing:-0.625px;">DR D Docspan</span>
<span class="t" style="left:1587.12px;top:656.99px;font-size:13.0px;color:#fff;font-weight:700;letter-spacing:-0.482px;">COVID19</span>
<span class="t" style="left:1663.30px;top:656.99px;font-size:13.0px;color:#fff;font-weight:700;">C</span>
<span class="t" style="left:1695.80px;top:656.99px;font-size:13.0px;color:#fff;font-weight:700;">D</span>
<span class="t" style="left:1727.66px;top:656.99px;font-size:13.0px;color:#fff;font-weight:700;">S</span>
<span class="t" style="left:1760.19px;top:656.99px;font-size:13.0px;color:#fff;font-weight:700;">I</span>
<span class="t" style="left:1786.80px;top:656.99px;font-size:13.0px;color:#fff;font-weight:700;">A</span>
<span class="t" style="left:1818.66px;top:656.99px;font-size:13.0px;color:#fff;font-weight:700;">V</span>
<span class="t" style="left:10.00px;top:695.10px;font-size:11.25px;color:#222;letter-spacing:-0.117px;">11:15</span>
<span class="t" style="left:67.40px;top:693.80px;font-size:15.0px;color:#222;letter-spacing:0.076px;">Arrived</span>
<span class="t" style="left:67.40px;top:712.80px;font-size:15.0px;color:#222;letter-spacing:-0.365px;">Insurance Ex</span>
<span class="t" style="left:242.00px;top:693.80px;font-size:15.0px;color:#000;letter-spacing:-0.537px;">GPD111</span>
<span class="t" style="left:306.42px;top:693.80px;font-size:15.0px;color:#000;letter-spacing:-0.770px;">ROO000033</span>
<span class="t" style="left:385.00px;top:693.80px;font-size:15.0px;color:#000;font-weight:700;letter-spacing:-0.697px;">MR BAKER, S, SIMON</span>
<span class="t" style="left:385.00px;top:712.80px;font-size:15.0px;color:#000;letter-spacing:-0.491px;">0722222223 M Age: 42 years</span>
<span class="t" style="left:782.17px;top:693.80px;font-size:15.0px;color:#000;letter-spacing:-1.279px;">DOCTOR:</span>
<span class="t" style="left:782.17px;top:712.80px;font-size:15.0px;color:#000;letter-spacing:-0.625px;">DR D Docspan</span>
<span class="t" style="left:1587.12px;top:701.99px;font-size:13.0px;color:#fff;font-weight:700;letter-spacing:-0.482px;">COVID19</span>
<span class="t" style="left:1663.30px;top:701.99px;font-size:13.0px;color:#fff;font-weight:700;">C</span>
<span class="t" style="left:1695.80px;top:701.99px;font-size:13.0px;color:#fff;font-weight:700;">D</span>
<span class="t" style="left:1727.66px;top:701.99px;font-size:13.0px;color:#fff;font-weight:700;">S</span>
<span class="t" style="left:1760.19px;top:701.99px;font-size:13.0px;color:#fff;font-weight:700;">I</span>
<span class="t" style="left:1786.80px;top:701.99px;font-size:13.0px;color:#fff;font-weight:700;">A</span>
<span class="t" style="left:1818.66px;top:701.99px;font-size:13.0px;color:#fff;font-weight:700;">V</span>
<span class="t" style="left:10.00px;top:740.10px;font-size:11.25px;color:#222;letter-spacing:-0.117px;">11:30</span>
<span class="t" style="left:67.40px;top:738.80px;font-size:15.0px;color:#222;letter-spacing:0.076px;">Arrived</span>
<span class="t" style="left:67.40px;top:757.80px;font-size:15.0px;color:#222;letter-spacing:0.213px;">Consultation</span>
<span class="t" style="left:242.00px;top:738.80px;font-size:15.0px;color:#000;letter-spacing:-0.759px;">GPD112</span>
<span class="t" style="left:306.42px;top:738.80px;font-size:15.0px;color:#000;letter-spacing:-0.770px;">ROO000034</span>
<span class="t" style="left:385.00px;top:738.80px;font-size:15.0px;color:#000;font-weight:700;letter-spacing:-0.701px;">MS FOURIE, W, WENDY</span>
<span class="t" style="left:385.00px;top:757.80px;font-size:15.0px;color:#000;letter-spacing:-0.507px;">0722222220 F Age: 32 years</span>
<span class="t" style="left:782.17px;top:738.80px;font-size:15.0px;color:#000;letter-spacing:-1.279px;">DOCTOR:</span>
<span class="t" style="left:782.17px;top:757.80px;font-size:15.0px;color:#000;letter-spacing:-0.625px;">DR D Docspan</span>
<span class="t" style="left:1587.12px;top:746.99px;font-size:13.0px;color:#fff;font-weight:700;letter-spacing:-0.482px;">COVID19</span>
<span class="t" style="left:1663.30px;top:746.99px;font-size:13.0px;color:#fff;font-weight:700;">C</span>
<span class="t" style="left:1695.80px;top:746.99px;font-size:13.0px;color:#fff;font-weight:700;">D</span>
<span class="t" style="left:1727.66px;top:746.99px;font-size:13.0px;color:#fff;font-weight:700;">S</span>
<span class="t" style="left:1760.19px;top:746.99px;font-size:13.0px;color:#fff;font-weight:700;">I</span>
<span class="t" style="left:1786.80px;top:746.99px;font-size:13.0px;color:#fff;font-weight:700;">A</span>
<span class="t" style="left:1818.66px;top:746.99px;font-size:13.0px;color:#fff;font-weight:700;">V</span>
<span class="t" style="left:10.00px;top:785.10px;font-size:11.25px;color:#222;letter-spacing:-0.117px;">11:45</span>
<span class="t" style="left:67.40px;top:783.80px;font-size:15.0px;color:#222;letter-spacing:0.066px;">Booked</span>
<span class="t" style="left:67.40px;top:802.80px;font-size:15.0px;color:#222;letter-spacing:0.213px;">Consultation</span>
<span class="t" style="left:242.00px;top:783.80px;font-size:15.0px;color:#000;letter-spacing:-1.129px;">GPD72</span>
<span class="t" style="left:298.32px;top:783.80px;font-size:15.0px;color:#000;letter-spacing:-0.770px;">ROO000010</span>
<span class="t" style="left:376.90px;top:783.80px;font-size:15.0px;color:#000;font-weight:700;letter-spacing:-0.721px;">MR LYNDON, J, JEAN-CLAUDE</span>
<span class="t" style="left:376.90px;top:802.80px;font-size:15.0px;color:#000;letter-spacing:-0.491px;">0820565901 M Age: 34 years</span>
<span class="t" style="left:776.77px;top:783.80px;font-size:15.0px;color:#000;letter-spacing:-1.279px;">DOCTOR:</span>
<span class="t" style="left:776.77px;top:802.80px;font-size:15.0px;color:#000;letter-spacing:-0.625px;">DR D Docspan</span>
<span class="t" style="left:1587.12px;top:791.99px;font-size:13.0px;color:#fff;font-weight:700;letter-spacing:-0.482px;">COVID19</span>
<span class="t" style="left:1663.30px;top:791.99px;font-size:13.0px;color:#fff;font-weight:700;">C</span>
<span class="t" style="left:1695.80px;top:791.99px;font-size:13.0px;color:#fff;font-weight:700;">D</span>
<span class="t" style="left:1727.66px;top:791.99px;font-size:13.0px;color:#fff;font-weight:700;">S</span>
<span class="t" style="left:1760.19px;top:791.99px;font-size:13.0px;color:#fff;font-weight:700;">I</span>
<span class="t" style="left:1786.80px;top:791.99px;font-size:13.0px;color:#fff;font-weight:700;">A</span>
<span class="t" style="left:1818.66px;top:791.99px;font-size:13.0px;color:#fff;font-weight:700;">V</span>
<span class="t" style="left:10.00px;top:830.10px;font-size:11.25px;color:#222;letter-spacing:-0.324px;">12:00</span>
<span class="t" style="left:67.40px;top:828.80px;font-size:15.0px;color:#222;letter-spacing:0.097px;">Cancellation</span>
<span class="t" style="left:67.40px;top:847.80px;font-size:15.0px;color:#222;letter-spacing:-0.365px;">Insurance Ex</span>
<span class="t" style="left:242.00px;top:828.80px;font-size:15.0px;color:#fff;letter-spacing:-0.759px;">GPD113</span>
<span class="t" style="left:306.42px;top:828.80px;font-size:15.0px;color:#fff;letter-spacing:-0.770px;">ROO000035</span>
<span class="t" style="left:385.00px;top:828.80px;font-size:15.0px;color:#fff;font-weight:700;letter-spacing:-0.643px;">MR VAN ZYL, HJ, HENDRIK JOHANNES</span>
<span class="t" style="left:385.00px;top:847.80px;font-size:15.0px;color:#fff;letter-spacing:-0.491px;">0820000900 M Age: 53 years</span>
<span class="t" style="left:782.17px;top:828.80px;font-size:15.0px;color:#fff;letter-spacing:-1.279px;">DOCTOR:</span>
<span class="t" style="left:782.17px;top:847.80px;font-size:15.0px;color:#fff;letter-spacing:-0.625px;">DR D Docspan</span>
<span class="t" style="left:1587.12px;top:836.99px;font-size:13.0px;color:#fff;font-weight:700;letter-spacing:-0.482px;">COVID19</span>
<span class="t" style="left:1663.30px;top:836.99px;font-size:13.0px;color:#fff;font-weight:700;">C</span>
<span class="t" style="left:1695.80px;top:836.99px;font-size:13.0px;color:#fff;font-weight:700;">D</span>
<span class="t" style="left:1727.66px;top:836.99px;font-size:13.0px;color:#fff;font-weight:700;">S</span>
<span class="t" style="left:1760.19px;top:836.99px;font-size:13.0px;color:#fff;font-weight:700;">I</span>
<span class="t" style="left:1786.80px;top:836.99px;font-size:13.0px;color:#fff;font-weight:700;">A</span>
<span class="t" style="left:1818.66px;top:836.99px;font-size:13.0px;color:#fff;font-weight:700;">V</span>
<span class="t" style="left:10.00px;top:875.10px;font-size:11.25px;color:#222;letter-spacing:-0.324px;">12:15</span>
<span class="t" style="left:67.40px;top:873.80px;font-size:15.0px;color:#222;letter-spacing:0.066px;">Booked</span>
<span class="t" style="left:67.40px;top:892.80px;font-size:15.0px;color:#222;letter-spacing:0.213px;">Consultation</span>
<span class="t" style="left:242.00px;top:873.80px;font-size:15.0px;color:#000;letter-spacing:-0.759px;">GPD115</span>
<span class="t" style="left:306.42px;top:873.80px;font-size:15.0px;color:#000;letter-spacing:-0.770px;">ROO000037</span>
<span class="t" style="left:385.00px;top:873.80px;font-size:15.0px;color:#000;font-weight:700;letter-spacing:-0.716px;">MS PIETERSE, S, SORAINE</span>
<span class="t" style="left:385.00px;top:892.80px;font-size:15.0px;color:#000;letter-spacing:-0.507px;">0820001303 F Age: 40 years</span>
<span class="t" style="left:782.17px;top:873.80px;font-size:15.0px;color:#000;letter-spacing:-1.279px;">DOCTOR:</span>
<span class="t" style="left:782.17px;top:892.80px;font-size:15.0px;color:#000;letter-spacing:-0.625px;">DR D Docspan</span>
<span class="t" style="left:1587.12px;top:881.99px;font-size:13.0px;color:#fff;font-weight:700;letter-spacing:-0.482px;">COVID19</span>
<span class="t" style="left:1663.30px;top:881.99px;font-size:13.0px;color:#fff;font-weight:700;">C</span>
<span class="t" style="left:1695.80px;top:881.99px;font-size:13.0px;color:#fff;font-weight:700;">D</span>
<span class="t" style="left:1727.66px;top:881.99px;font-size:13.0px;color:#fff;font-weight:700;">S</span>
<span class="t" style="left:1760.19px;top:881.99px;font-size:13.0px;color:#fff;font-weight:700;">I</span>
<span class="t" style="left:1786.80px;top:881.99px;font-size:13.0px;color:#fff;font-weight:700;">A</span>
<span class="t" style="left:1818.66px;top:881.99px;font-size:13.0px;color:#fff;font-weight:700;">V</span>
<span class="t" style="left:10.00px;top:920.10px;font-size:11.25px;color:#222;letter-spacing:-0.324px;">12:30</span>
<span class="t" style="left:67.40px;top:918.80px;font-size:15.0px;color:#222;letter-spacing:0.066px;">Booked</span>
<span class="t" style="left:67.40px;top:937.80px;font-size:15.0px;color:#222;letter-spacing:0.045px;">Follow Up</span>
<span class="t" style="left:242.00px;top:918.80px;font-size:15.0px;color:#000;letter-spacing:-0.759px;">GPD116</span>
<span class="t" style="left:306.42px;top:918.80px;font-size:15.0px;color:#000;letter-spacing:-0.770px;">ROO000038</span>
<span class="t" style="left:385.00px;top:918.80px;font-size:15.0px;color:#000;font-weight:700;letter-spacing:-0.415px;">MR MNGUNI, S, SIPHO</span>
<span class="t" style="left:385.00px;top:937.80px;font-size:15.0px;color:#000;letter-spacing:-0.491px;">0722222220 M Age: 35 years</span>
<span class="t" style="left:782.17px;top:918.80px;font-size:15.0px;color:#000;letter-spacing:-1.279px;">DOCTOR:</span>
<span class="t" style="left:782.17px;top:937.80px;font-size:15.0px;color:#000;letter-spacing:-0.625px;">DR D Docspan</span>
<span class="t" style="left:1587.12px;top:926.99px;font-size:13.0px;color:#fff;font-weight:700;letter-spacing:-0.482px;">COVID19</span>
<span class="t" style="left:1663.30px;top:926.99px;font-size:13.0px;color:#fff;font-weight:700;">C</span>
<span class="t" style="left:1695.80px;top:926.99px;font-size:13.0px;color:#fff;font-weight:700;">D</span>
<span class="t" style="left:1727.66px;top:926.99px;font-size:13.0px;color:#fff;font-weight:700;">S</span>
<span class="t" style="left:1760.19px;top:926.99px;font-size:13.0px;color:#fff;font-weight:700;">I</span>
<span class="t" style="left:1786.80px;top:926.99px;font-size:13.0px;color:#fff;font-weight:700;">A</span>
<span class="t" style="left:1818.66px;top:926.99px;font-size:13.0px;color:#fff;font-weight:700;">V</span>
</div></body></html>
